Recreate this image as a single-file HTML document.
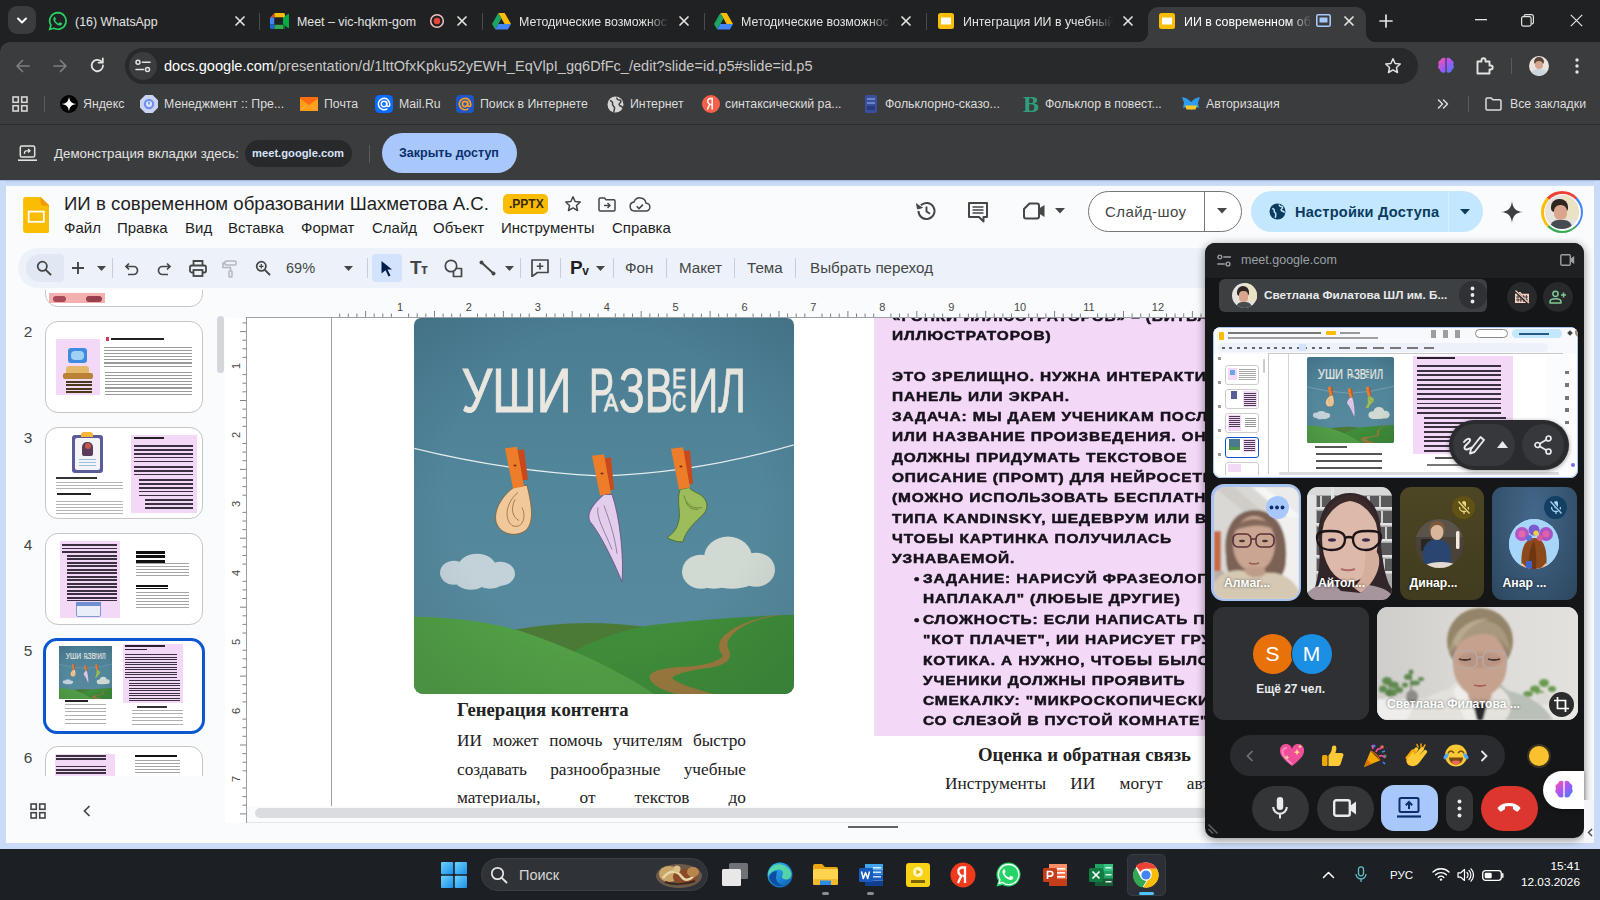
<!DOCTYPE html>
<html lang="ru">
<head>
<meta charset="utf-8">
<title>ИИ в современном образовании</title>
<style>
*{box-sizing:border-box;margin:0;padding:0}
html,body{width:1600px;height:900px;overflow:hidden;background:#f9fbfd;font-family:"Liberation Sans",sans-serif;}
.abs{position:absolute}
#root{position:relative;width:1600px;height:900px;overflow:hidden}
/* ---------- chrome ---------- */
#tabstrip{left:0;top:0;width:1600px;height:60px;background:#202122}
#toolbar{left:0;top:42px;width:1600px;height:82px;background:#3b3c3d;border-top-left-radius:10px}
#infobar{left:0;top:124px;width:1600px;height:57px;background:#3b3c3d;border-top:1px solid #2c2d2e}
.tab{position:absolute;top:1px;height:42px;color:#e3e3e3;font-size:12.4px;line-height:42px;white-space:nowrap}
.tabt{position:absolute;top:1px;overflow:hidden;height:42px}
.tsep{position:absolute;top:13px;width:1px;height:17px;background:#4a4b4c}
.tx{position:absolute;top:14px;width:14px;height:14px}
.bm{position:absolute;top:88px;height:32px;line-height:32px;color:#dcdcdc;font-size:12.3px;white-space:nowrap}
/* ---------- slides ---------- */
#page{left:0;top:181px;width:1600px;height:668px;background:#f9fbfd}
.menu{position:absolute;top:218.6px;font-size:15px;color:#1f1f1f;line-height:18px}
.tb{top:258px;height:20px;line-height:20px;font-size:15.2px;color:#444746;white-space:nowrap}
.rn{width:20px;height:14px;line-height:14px;text-align:center;font-size:11px;color:#444746}
.pk{height:20px;line-height:20px;font-size:13.3px;font-weight:bold;color:#16111a;white-space:nowrap;letter-spacing:.75px;-webkit-text-stroke:.5px #16111a;transform:scaleX(1.16);transform-origin:0 50%}
.sj{width:289px;height:24px;line-height:24px;font-family:"Liberation Serif",serif;font-size:17.3px;color:#222;text-align:justify;text-align-last:justify;white-space:normal}
.th{left:45px;width:158px;height:92px;border-radius:13px;border:1px solid #c4c7c5;background:#fff}
.fn{left:18px;width:20px;height:20px;line-height:20px;text-align:center;font-size:15.5px;color:#444746}
.tn{height:20px;line-height:20px;font-size:12.2px;font-weight:bold;color:#fff;white-space:nowrap;text-shadow:0 0 3px rgba(0,0,0,.6)}
/* ---------- taskbar ---------- */
#taskbar{left:0;top:849px;width:1600px;height:51px;background:#1c2025}
/* ---------- meet ---------- */
#meet{left:1205px;top:243px;width:379px;height:594.5px;background:#151617;border-radius:10px;box-shadow:0 2px 10px rgba(0,0,0,.45)}
</style>
</head>
<body>
<div id="root">

<!-- ======= CHROME TABSTRIP ======= -->

<div id="tabstrip" class="abs"></div>
<div class="abs" style="left:8px;top:6px;width:28px;height:28px;border-radius:9px;background:#3b3c3d"></div>
<svg class="abs" style="left:15px;top:15px" width="14" height="12" viewBox="0 0 14 12"><path d="M3 3.5 L7 7.5 L11 3.5" fill="none" stroke="#fff" stroke-width="1.9" stroke-linecap="round" stroke-linejoin="round"/></svg>
<!-- active tab -->
<div class="abs" style="left:1148px;top:7px;width:218px;height:36px;background:#3b3c3d;border-radius:10px 10px 0 0"></div>
<div class="abs" style="left:1138px;top:32px;width:10px;height:10px;background:radial-gradient(circle at 0 0,transparent 10px,#3b3c3d 10.5px)"></div>
<div class="abs" style="left:1366px;top:32px;width:10px;height:10px;background:radial-gradient(circle at 100% 0,transparent 10px,#3b3c3d 10.5px)"></div>

<!-- tab 1 whatsapp -->
<svg class="abs" style="left:48px;top:11px" width="20" height="20" viewBox="0 0 20 20"><path d="M10 1.6a8.3 8.3 0 0 0-7.1 12.6L1.7 18.4l4.3-1.1A8.3 8.3 0 1 0 10 1.6z" fill="none" stroke="#25d366" stroke-width="1.7"/><path d="M7.2 5.6c-.3 0-.7.1-1 .5-.4.5-1 1.300-.8 2.600.3 1.500 1.400 3.100 2.900 4.300 1.500 1.200 3 1.700 4 1.500.9-.2 1.600-.9 1.800-1.500.1-.4.1-.7-.1-.8l-1.800-.9c-.3-.1-.5 0-.7.200l-.6.8c-.2.2-.4.2-.7.100-1.300-.6-2.300-1.500-3-2.700-.1-.3-.1-.5.1-.6l.5-.7c.1-.2.100-.4.000-.6l-.8-1.800c-.1-.3-.3-.400-.5-.400z" fill="#25d366"/></svg>
<div class="tab" style="left:75px">(16) WhatsApp</div>
<svg class="tx" style="left:233px" viewBox="0 0 14 14"><path d="M3 3l8 8M11 3l-8 8" stroke="#e3e3e3" stroke-width="1.7" stroke-linecap="round"/></svg>
<div class="tsep" style="left:259px"></div>
<!-- tab 2 meet -->
<svg class="abs" style="left:270px;top:13px" width="19" height="16" viewBox="0 0 19 16"><path d="M0 4.500 L4.500 0 V4.500Z" fill="#ea4335"/><rect x="4.500" y="0" width="8.500" height="4.500" fill="#fbbc04"/><rect x="0" y="4.500" width="4.500" height="7" fill="#4285f4"/><path d="M0 11.5h4.500V16H1.500A1.500 1.500 0 0 1 0 14.500z" fill="#1967d2"/><rect x="4.500" y="11.5" width="8.500" height="4.500" fill="#34a853"/><path d="M13 0h.5A1.500 1.500 0 0 1 15 1.500V4.500L13 6z" fill="#fbbc04"/><path d="M13 4.800 L18 1 Q19 .4 19 1.600 V14.400 Q19 15.600 18 15 L13 11.200Z" fill="#00ac47"/><path d="M13 11.200 V16h.5a1.500 1.500 0 0 0 1.500-1.500V12.700z" fill="#00832d"/><rect x="4.500" y="4.500" width="8.500" height="7" fill="#202122"/></svg>
<div class="tab" style="left:297px">Meet – vic-hqkm-gom</div>
<svg class="abs" style="left:429px;top:13px" width="16" height="16" viewBox="0 0 16 16"><circle cx="8" cy="8" r="6.300" fill="none" stroke="#f1c4c0" stroke-width="1.500"/><circle cx="8" cy="8" r="3.200" fill="#e8453c"/></svg>
<svg class="tx" style="left:455px" viewBox="0 0 14 14"><path d="M3 3l8 8M11 3l-8 8" stroke="#e3e3e3" stroke-width="1.7" stroke-linecap="round"/></svg>
<div class="tsep" style="left:482px"></div>
<!-- tab 3 drive -->
<svg class="abs" style="left:492px;top:13px" width="19" height="17" viewBox="0 0 19 17"><path d="M6.300 0h6.400l6.300 11h-6.400z" fill="#fbbc04"/><path d="M6.300 0L0 11l3.200 5.600L9.500 5.600z" fill="#1ea362"/><path d="M3.200 16.600h12.600L19 11H6.400z" fill="#4285f4"/></svg>
<div class="tab tabt" style="left:519px;width:150px;-webkit-mask-image:linear-gradient(90deg,#000 128px,transparent 150px);mask-image:linear-gradient(90deg,#000 128px,transparent 150px)">Методические возможности</div>
<svg class="tx" style="left:677px" viewBox="0 0 14 14"><path d="M3 3l8 8M11 3l-8 8" stroke="#e3e3e3" stroke-width="1.7" stroke-linecap="round"/></svg>
<div class="tsep" style="left:704px"></div>
<!-- tab 4 drive -->
<svg class="abs" style="left:714px;top:13px" width="19" height="17" viewBox="0 0 19 17"><path d="M6.300 0h6.400l6.300 11h-6.400z" fill="#fbbc04"/><path d="M6.300 0L0 11l3.200 5.600L9.500 5.600z" fill="#1ea362"/><path d="M3.200 16.600h12.600L19 11H6.400z" fill="#4285f4"/></svg>
<div class="tab tabt" style="left:741px;width:150px;-webkit-mask-image:linear-gradient(90deg,#000 128px,transparent 150px);mask-image:linear-gradient(90deg,#000 128px,transparent 150px)">Методические возможности</div>
<svg class="tx" style="left:899px" viewBox="0 0 14 14"><path d="M3 3l8 8M11 3l-8 8" stroke="#e3e3e3" stroke-width="1.7" stroke-linecap="round"/></svg>
<div class="tsep" style="left:926px"></div>
<!-- tab 5 slides -->
<svg class="abs" style="left:938px;top:13px" width="16" height="16" viewBox="0 0 16 16"><rect width="16" height="16" rx="2.500" fill="#fbbc04"/><rect x="3" y="4.500" width="10" height="7" fill="#fff"/></svg>
<div class="tab tabt" style="left:963px;width:150px;-webkit-mask-image:linear-gradient(90deg,#000 128px,transparent 150px);mask-image:linear-gradient(90deg,#000 128px,transparent 150px)">Интеграция ИИ в учебный процесс</div>
<svg class="tx" style="left:1121px" viewBox="0 0 14 14"><path d="M3 3l8 8M11 3l-8 8" stroke="#e3e3e3" stroke-width="1.7" stroke-linecap="round"/></svg>
<!-- tab 6 active -->
<svg class="abs" style="left:1159px;top:13px" width="16" height="16" viewBox="0 0 16 16"><rect width="16" height="16" rx="2.500" fill="#fbbc04"/><rect x="3" y="4.500" width="10" height="7" fill="#fff"/></svg>
<div class="tab tabt" style="left:1184px;width:128px;color:#fff;-webkit-mask-image:linear-gradient(90deg,#000 106px,transparent 128px);mask-image:linear-gradient(90deg,#000 106px,transparent 128px)">ИИ в современном образовании</div>
<svg class="abs" style="left:1316px;top:14px" width="15" height="13" viewBox="0 0 15 13"><rect x=".8" y=".8" width="13.400" height="11.400" rx="1.500" fill="none" stroke="#a8c7fa" stroke-width="1.600"/><rect x="3.500" y="3.500" width="8" height="5" fill="#a8c7fa"/></svg>
<svg class="tx" style="left:1342px" viewBox="0 0 14 14"><path d="M3 3l8 8M11 3l-8 8" stroke="#e3e3e3" stroke-width="1.7" stroke-linecap="round"/></svg>
<svg class="abs" style="left:1379px;top:14px" width="14" height="14" viewBox="0 0 14 14"><path d="M7 1v12M1 7h12" stroke="#e3e3e3" stroke-width="1.700" stroke-linecap="round"/></svg>
<!-- window controls -->
<svg class="abs" style="left:1475px;top:19px" width="12" height="2" viewBox="0 0 12 2"><rect width="12" height="1.300" fill="#e3e3e3"/></svg>
<svg class="abs" style="left:1521px;top:14px" width="13" height="13" viewBox="0 0 13 13"><rect x=".6" y="2.600" width="9.500" height="9.500" rx="1.800" fill="none" stroke="#e3e3e3" stroke-width="1.200"/><path d="M3 2.600V2.400A1.800 1.800 0 0 1 4.800 .6h5.800a1.800 1.800 0 0 1 1.800 1.800v5.800A1.800 1.800 0 0 1 10.600 10h-.4" fill="none" stroke="#e3e3e3" stroke-width="1.200"/></svg>
<svg class="abs" style="left:1570px;top:14px" width="13" height="13" viewBox="0 0 13 13"><path d="M.8.8l11.400 11.400M12.200.8L.8 12.200" stroke="#e3e3e3" stroke-width="1.200"/></svg>

<!-- ======= CHROME TOOLBAR + BOOKMARKS ======= -->

<div id="toolbar" class="abs"></div>
<!-- nav -->
<svg class="abs" style="left:15px;top:58px" width="16" height="16" viewBox="0 0 16 16"><path d="M14 8H2.500M7.500 2.500L2 8l5.500 5.500" fill="none" stroke="#7d7e80" stroke-width="1.700" stroke-linecap="round" stroke-linejoin="round"/></svg>
<svg class="abs" style="left:52px;top:58px" width="16" height="16" viewBox="0 0 16 16"><path d="M2 8h11.500M8.500 2.500L14 8l-5.500 5.500" fill="none" stroke="#7d7e80" stroke-width="1.700" stroke-linecap="round" stroke-linejoin="round"/></svg>
<svg class="abs" style="left:89px;top:57px" width="17" height="17" viewBox="0 0 17 17"><path d="M14 8.500a5.700 5.700 0 1 1-1.700-4.050" fill="none" stroke="#e3e3e3" stroke-width="1.800" stroke-linecap="round"/><path d="M13.800 1.500v4.200H9.600" fill="none" stroke="#e3e3e3" stroke-width="1.800" stroke-linecap="round" stroke-linejoin="round"/></svg>
<!-- omnibox -->
<div class="abs" style="left:125px;top:48px;width:1293px;height:36px;border-radius:18px;background:#27292a"></div>
<div class="abs" style="left:129px;top:52px;width:28px;height:28px;border-radius:14px;background:#3b3c3d"></div>
<svg class="abs" style="left:135px;top:59px" width="16" height="14" viewBox="0 0 16 14"><circle cx="3" cy="3.200" r="2" fill="none" stroke="#e3e3e3" stroke-width="1.500"/><path d="M7.500 3.200H15" stroke="#e3e3e3" stroke-width="1.600" stroke-linecap="round"/><circle cx="12.500" cy="10.500" r="2" fill="none" stroke="#e3e3e3" stroke-width="1.500"/><path d="M1 10.500h7.500" stroke="#e3e3e3" stroke-width="1.600" stroke-linecap="round"/></svg>
<div class="abs" id="url" style="left:164px;top:55px;height:22px;line-height:22px;font-size:14.55px;color:#c7c7c7;white-space:nowrap"><span style="color:#fff">docs.google.com</span>/presentation/d/1lttOfxKpku52yEWH_EqVlpI_gq6DfFc_/edit?slide=id.p5#slide=id.p5</div>
<svg class="abs" style="left:1384px;top:57px" width="18" height="18" viewBox="0 0 18 18"><path d="M9 1.800l2.150 4.700 5.100.55-3.800 3.450 1.050 5L9 12.900 4.500 15.500l1.050-5-3.800-3.450 5.100-.55z" fill="none" stroke="#e3e3e3" stroke-width="1.500" stroke-linejoin="round"/></svg>
<!-- extension: brain -->
<svg class="abs" style="left:1436px;top:56px" width="20" height="20" viewBox="0 0 20 20"><defs><linearGradient id="br1" x1="0" y1="0" x2="1" y2="1"><stop offset="0" stop-color="#f857a6"/><stop offset=".5" stop-color="#a855f7"/><stop offset="1" stop-color="#3b82f6"/></linearGradient></defs><path d="M9.400 2.200C7.500 1 5 2 4.600 4.100 2.600 4.700 1.700 7 2.800 8.700 1.500 10.300 2 12.800 3.900 13.600c.1 2.300 2.500 3.800 4.600 2.900.4-.2.700-.4.900-.700zM10.600 2.200c1.900-1.200 4.400-.2 4.800 1.900 2 .6 2.900 2.900 1.800 4.600 1.300 1.600.8 4.100-1.100 4.900-.1 2.300-2.500 3.800-4.600 2.900-.4-.2-.7-.4-.9-.700z" fill="url(#br1)"/></svg>
<!-- puzzle -->
<svg class="abs" style="left:1474px;top:55px" width="21" height="21" viewBox="0 0 21 21"><path d="M3.500 6.500h4V5.300a2 2 0 1 1 4 0V6.500h4v4h1.200a2 2 0 1 1 0 4H15.500v4h-12z" fill="none" stroke="#e3e3e3" stroke-width="1.900" stroke-linejoin="round"/></svg>
<div class="abs" style="left:1511px;top:58px;width:1px;height:16px;background:#5a5b5c"></div>
<!-- avatar -->
<div class="abs" style="left:1529px;top:56px;width:20px;height:20px;border-radius:10px;background:#e9e4e0;overflow:hidden"><div class="abs" style="left:5px;top:1px;width:10px;height:7px;border-radius:5px 5px 2px 2px;background:#5b463c"></div><div class="abs" style="left:6px;top:5px;width:8px;height:8px;border-radius:4px;background:#d6a58e"></div><div class="abs" style="left:2px;top:13px;width:16px;height:10px;border-radius:6px 6px 0 0;background:#cdd6dd"></div></div>
<svg class="abs" style="left:1574px;top:57px" width="6" height="18" viewBox="0 0 6 18"><circle cx="3" cy="3" r="1.700" fill="#e3e3e3"/><circle cx="3" cy="9" r="1.700" fill="#e3e3e3"/><circle cx="3" cy="15" r="1.700" fill="#e3e3e3"/></svg>

<!-- bookmarks -->
<svg class="abs" style="left:12px;top:96px" width="16" height="16" viewBox="0 0 16 16"><g fill="none" stroke="#d5d5d5" stroke-width="1.600"><rect x="1" y="1" width="5.300" height="5.300"/><rect x="9.700" y="1" width="5.300" height="5.300"/><rect x="1" y="9.700" width="5.300" height="5.300"/><rect x="9.700" y="9.700" width="5.300" height="5.300"/></g></svg>
<div class="abs" style="left:44px;top:96px;width:1px;height:16px;background:#5a5b5c"></div>
<!-- yandex star -->
<svg class="abs" style="left:60px;top:95px" width="18" height="18" viewBox="0 0 18 18"><circle cx="9" cy="9" r="9" fill="#000"/><path d="M9 1.200C9.300 6.200 11.800 8.700 16.800 9 11.800 9.300 9.300 11.800 9 16.800 8.700 11.800 6.200 9.300 1.200 9 6.200 8.700 8.700 6.200 9 1.200z" fill="#fff"/></svg>
<div class="bm" style="left:83px">Яндекс</div>
<svg class="abs" style="left:140px;top:95px" width="18" height="18" viewBox="0 0 18 18"><path d="M5.300 0h7.400L18 5.300v7.400L12.700 18H5.300L0 12.700V5.300z" fill="#c9d3f3"/><circle cx="9" cy="9" r="5.200" fill="#6f8ff0"/><circle cx="9" cy="9" r="3" fill="#dfe6fb"/><path d="M9 6.800v2.600" stroke="#4a6fe0" stroke-width="1.200"/></svg>
<div class="bm" style="left:164px">Менеджмент :: Пре...</div>
<svg class="abs" style="left:300px;top:97px" width="18" height="14" viewBox="0 0 18 14"><rect width="18" height="14" rx="2" fill="#ff9e1b"/><path d="M0 1.500l9 6.500 9-6.500V0H0z" fill="#ff6a13"/><path d="M0 14l6.500-6M18 14l-6.500-6" stroke="#ffb54a" stroke-width="1"/></svg>
<div class="bm" style="left:324px">Почта</div>
<svg class="abs" style="left:375px;top:95px" width="18" height="18" viewBox="0 0 18 18"><rect width="18" height="18" rx="4.500" fill="#0a6cff"/><circle cx="9" cy="9" r="2.700" fill="none" stroke="#fff" stroke-width="1.500"/><path d="M11.700 6.500V10a1.500 1.500 0 0 0 3 0V9a5.700 5.700 0 1 0-2.300 4.600" fill="none" stroke="#fff" stroke-width="1.500"/></svg>
<div class="bm" style="left:399px">Mail.Ru</div>
<svg class="abs" style="left:456px;top:95px" width="18" height="18" viewBox="0 0 18 18"><rect width="18" height="18" rx="4" fill="#1d56c9"/><circle cx="9" cy="9" r="2.600" fill="none" stroke="#ff9e1b" stroke-width="1.700"/><path d="M11.700 6.500V10a1.500 1.500 0 0 0 3 0V9a5.700 5.700 0 1 0-2.300 4.600" fill="none" stroke="#ff9e1b" stroke-width="1.700"/></svg>
<div class="bm" style="left:480px">Поиск в Интернете</div>
<svg class="abs" style="left:607px;top:96px" width="17" height="17" viewBox="0 0 17 17"><circle cx="8.500" cy="8.500" r="8" fill="#d5d5d5"/><path d="M3 4.500c2 .5 3 2 2.500 3.500S7 10 7.500 11.500 6.500 15 7 16M10 1.500c-.5 2 1 2.500 2.500 2.500s2 2 .5 3-1 2.500.5 3 2.500 1.500 2 2.500" fill="none" stroke="#3b3c3d" stroke-width="1.500"/></svg>
<div class="bm" style="left:630px">Интернет</div>
<svg class="abs" style="left:702px;top:95px" width="18" height="18" viewBox="0 0 18 18"><circle cx="9" cy="9" r="9" fill="#f8604a"/><path d="M10.200 14.500V3.500H8.600c-1.700 0-2.900 1.100-2.900 2.800 0 1.400.7 2.300 2 3l-2.400 5.200M8.600 9.500h1.500" fill="none" stroke="#fff" stroke-width="1.500"/></svg>
<div class="bm" style="left:725px">синтаксический ра...</div>
<svg class="abs" style="left:864px;top:95px" width="14" height="18" viewBox="0 0 14 18"><rect x="1" y="0" width="12" height="18" rx="1.500" fill="#3a4f9c"/><rect x="3" y="3" width="8" height="2" fill="#6d82cf"/><rect x="3" y="7" width="8" height="2" fill="#6d82cf"/><rect x="3" y="11" width="8" height="4" fill="#2a3a7a"/></svg>
<div class="bm" style="left:885px">Фольклорно-сказо...</div>
<div class="abs" style="left:1023px;top:91px;width:18px;height:26px;line-height:26px;font-family:'Liberation Serif',serif;font-weight:bold;font-size:24px;color:#2f9e7b">B</div>
<div class="bm" style="left:1045px">Фольклор в повест...</div>
<svg class="abs" style="left:1182px;top:96px" width="18" height="16" viewBox="0 0 18 16"><path d="M0 1l5 1.500L9 6l4-3.500L18 1l-2 6 1 5-5-1.500L9 14l-3-3.500L1 12l1-5z" fill="#2d9cf0"/><path d="M3 9.500h12l-1.500 4h-9z" fill="#ffc727"/></svg>
<div class="bm" style="left:1206px">Авторизация</div>
<svg class="abs" style="left:1437px;top:99px" width="12" height="10" viewBox="0 0 12 10"><path d="M1.500 1l4 4-4 4M6.500 1l4 4-4 4" fill="none" stroke="#dcdcdc" stroke-width="1.500" stroke-linecap="round" stroke-linejoin="round"/></svg>
<div class="abs" style="left:1468px;top:96px;width:1px;height:16px;background:#5a5b5c"></div>
<svg class="abs" style="left:1485px;top:97px" width="17" height="14" viewBox="0 0 17 14"><path d="M1 2.200A1.200 1.200 0 0 1 2.200 1h4l1.600 1.800h7A1.200 1.200 0 0 1 16 4v7.800a1.200 1.200 0 0 1-1.200 1.200H2.200A1.200 1.200 0 0 1 1 11.800z" fill="none" stroke="#dcdcdc" stroke-width="1.500" stroke-linejoin="round"/></svg>
<div class="bm" style="left:1510px">Все закладки</div>

<!-- ======= SHARING INFOBAR ======= -->

<div id="infobar" class="abs"></div>
<svg class="abs" style="left:18px;top:145px" width="19" height="17" viewBox="0 0 19 17"><rect x="2.300" y="1" width="14.400" height="11" rx="1.600" fill="none" stroke="#e3e3e3" stroke-width="1.500"/><path d="M0 15.200h19" stroke="#e3e3e3" stroke-width="1.600"/><path d="M6.500 9V7.800A2 2 0 0 1 8.500 5.800h3.200M10.200 4l1.800 1.800-1.800 1.800" fill="none" stroke="#e3e3e3" stroke-width="1.300"/></svg>
<div class="abs" id="demo" style="left:54px;top:144px;height:20px;line-height:20px;font-size:13.3px;color:#e3e3e3;white-space:nowrap">Демонстрация вкладки здесь:</div>
<div class="abs" style="left:245px;top:140px;width:107px;height:27px;border-radius:14px;background:#27292a"></div>
<div class="abs" id="chip" style="left:252px;top:144px;height:20px;line-height:19px;font-size:11.2px;font-weight:bold;color:#d7e3f9;white-space:nowrap">meet.google.com</div>
<div class="abs" style="left:369px;top:145px;width:1px;height:18px;background:#5a5b5c"></div>
<div class="abs" style="left:382px;top:133px;width:135px;height:40px;border-radius:20px;background:#a8c7fa"></div>
<div class="abs" id="closebtn" style="left:399px;top:143px;height:20px;line-height:20px;font-size:12.5px;font-weight:bold;color:#0b2f6b;white-space:nowrap">Закрыть доступ</div>


<!-- ======= SLIDES PAGE ======= -->

<div id="page" class="abs"></div>
<!-- tab-capture blue frame -->
<div class="abs" style="left:0;top:180px;width:1600px;height:6px;background:linear-gradient(#9fb6dc 0,#c3d6f5 2px,#cfdff8 100%)"></div>
<div class="abs" style="left:0;top:181px;width:6px;height:668px;background:#c9dbf7"></div>
<div class="abs" style="left:1594px;top:181px;width:6px;height:668px;background:#c9dbf7"></div>
<div class="abs" style="left:0;top:843px;width:1600px;height:6px;background:#c9dbf7"></div>

<!-- slides logo -->
<svg class="abs" style="left:22.500px;top:196.500px" width="26.500" height="36" viewBox="0 0 27 37"><path d="M2.500 0H18l9 9v25.500A2.500 2.500 0 0 1 24.500 37h-22A2.500 2.500 0 0 1 0 34.500v-32A2.500 2.500 0 0 1 2.500 0z" fill="#fbbc04"/><path d="M18 0l9 9h-6.500A2.500 2.500 0 0 1 18 6.500z" fill="#f29900"/><rect x="5.700" y="15" width="15.600" height="10.500" fill="none" stroke="#fff" stroke-width="1.800"/></svg>
<div class="abs" id="doctitle" style="left:64px;top:192px;height:24px;line-height:24px;font-size:18.6px;color:#1f1f1f;white-space:nowrap">ИИ в современном образовании Шахметова А.С.</div>
<div class="abs" style="left:503px;top:194px;width:45px;height:20px;border-radius:5px;background:#fbbc04"></div>
<div class="abs" id="pptx" style="left:509px;top:194px;height:20px;line-height:20px;font-size:12px;font-weight:bold;color:#3a2a00;white-space:nowrap">.PPTX</div>
<svg class="abs" style="left:564px;top:195px" width="18" height="18" viewBox="0 0 18 18"><path d="M9 1.800l2.150 4.700 5.100.55-3.800 3.450 1.050 5L9 12.900 4.500 15.500l1.050-5-3.800-3.450 5.100-.55z" fill="none" stroke="#444746" stroke-width="1.500" stroke-linejoin="round"/></svg>
<svg class="abs" style="left:598px;top:197px" width="18" height="15" viewBox="0 0 18 15"><path d="M1 2.200A1.200 1.200 0 0 1 2.200 1h4.300l1.600 1.800h7.700A1.200 1.200 0 0 1 17 4v8.800a1.200 1.200 0 0 1-1.200 1.200H2.200A1.200 1.200 0 0 1 1 12.800z" fill="none" stroke="#444746" stroke-width="1.500" stroke-linejoin="round"/><path d="M6 8.500h5.500M9.500 6l2.500 2.500-2.500 2.500" fill="none" stroke="#444746" stroke-width="1.400"/></svg>
<svg class="abs" style="left:629px;top:197px" width="22" height="15" viewBox="0 0 22 15"><path d="M5.500 14A4.500 4.500 0 0 1 5 5.050 6.200 6.200 0 0 1 17 6.200 3.900 3.900 0 0 1 17 14z" fill="none" stroke="#444746" stroke-width="1.500" stroke-linejoin="round"/><path d="M7.700 9.300l2.300 2.300 4-4" fill="none" stroke="#444746" stroke-width="1.500"/></svg>
<!-- menus -->
<div class="menu" style="left:64px">Файл</div>
<div class="menu" style="left:117px">Правка</div>
<div class="menu" style="left:185px">Вид</div>
<div class="menu" style="left:228px">Вставка</div>
<div class="menu" style="left:301px">Формат</div>
<div class="menu" style="left:372px">Слайд</div>
<div class="menu" style="left:433px">Объект</div>
<div class="menu" style="left:501px">Инструменты</div>
<div class="menu" style="left:612px">Справка</div>

<!-- right header icons -->
<svg class="abs" style="left:915px;top:200px" width="22" height="22" viewBox="0 0 22 22"><path d="M3.500 11a8 8 0 1 0 2.400-5.700" fill="none" stroke="#444746" stroke-width="2"/><path d="M1.500 3.500l1 5.500 5.200-1.500" fill="#444746" stroke="#444746" stroke-width="1" stroke-linejoin="round"/><path d="M11.500 6.500V11.500l3.500 2.200" fill="none" stroke="#444746" stroke-width="1.900"/></svg>
<svg class="abs" style="left:967px;top:201px" width="22" height="22" viewBox="0 0 22 22"><path d="M2 2h18v14h-3.500v4.500L12 16H2z" fill="none" stroke="#444746" stroke-width="2" stroke-linejoin="round"/><path d="M5.500 6h11M5.500 9h11M5.500 12h11" stroke="#444746" stroke-width="1.600"/></svg>
<svg class="abs" style="left:1022px;top:202px" width="24" height="18" viewBox="0 0 24 18"><path d="M7.500 1.500H15a2 2 0 0 1 2 2v11a2 2 0 0 1-2 2H4a2 2 0 0 1-2-2V7z" fill="none" stroke="#444746" stroke-width="2" stroke-linejoin="round"/><path d="M17 6.500l5.500-3.500v12L17 11.500z" fill="#444746"/></svg>
<svg class="abs" style="left:1055px;top:208px" width="10" height="6" viewBox="0 0 10 6"><path d="M0 0h10L5 5.500z" fill="#444746"/></svg>
<!-- slideshow button -->
<div class="abs" style="left:1088px;top:191px;width:154px;height:41px;border-radius:21px;border:1px solid #747775;background:#fff"></div>
<div class="abs" style="left:1204px;top:192px;width:1px;height:39px;background:#747775"></div>
<div class="abs" id="slideshow" style="left:1105px;top:201px;height:22px;line-height:22px;font-size:15px;letter-spacing:.4px;color:#444746;white-space:nowrap">Слайд-шоу</div>
<svg class="abs" style="left:1217px;top:208px" width="10" height="6" viewBox="0 0 10 6"><path d="M0 0h10L5 5.500z" fill="#444746"/></svg>
<!-- share button -->
<div class="abs" style="left:1251px;top:191px;width:232px;height:41px;border-radius:21px;background:#c2e7ff"></div>
<div class="abs" style="left:1448px;top:191px;width:1px;height:41px;background:#d9effd"></div>
<svg class="abs" style="left:1269px;top:203px" width="17" height="17" viewBox="0 0 17 17"><circle cx="8.500" cy="8.500" r="8" fill="#0b3b60"/><path d="M3.200 5.500c1.800.2 2.300 1.500 2 2.600-.3 1 1 1.400 1.500 2.300.5.900-.500 2.500-.2 4.500M10.500 1.500c-.5 1.500.5 2 1.800 2s1.700 1.500.5 2.300-.8 2 .5 2.300c1.300.3 2 1 2.200 1.500" fill="none" stroke="#c2e7ff" stroke-width="1.500"/></svg>
<div class="abs" id="share" style="left:1295px;top:201px;height:22px;line-height:22px;font-size:14.6px;font-weight:bold;letter-spacing:.2px;color:#0b3b60;white-space:nowrap">Настройки Доступа</div>
<svg class="abs" style="left:1460px;top:209px" width="10" height="6" viewBox="0 0 10 6"><path d="M0 0h10L5 5.500z" fill="#0b3b60"/></svg>
<!-- gemini spark -->
<svg class="abs" style="left:1501px;top:201px" width="22" height="22" viewBox="0 0 22 22"><path d="M11 0C11.500 7 15 10.500 22 11 15 11.500 11.500 15 11 22 10.500 15 7 11.500 0 11 7 10.500 10.500 7 11 0z" fill="#3c4043"/></svg>
<!-- account avatar -->
<div class="abs" style="left:1541px;top:191px;width:42px;height:42px;border-radius:21px;background:conic-gradient(from -45deg,#ea4335 0 25%,#4285f4 25% 50%,#34a853 50% 75%,#fbbc04 75% 100%)"></div>
<div class="abs" style="left:1543.500px;top:193.500px;width:37px;height:37px;border-radius:19px;background:#fff"></div>
<div class="abs" style="left:1545px;top:195px;width:34px;height:34px;border-radius:17px;background:#e6e3df;overflow:hidden">
  <div class="abs" style="left:17px;top:0;width:17px;height:24px;background:#e9e2c4"></div>
  <div class="abs" style="left:6px;top:4px;width:17px;height:13px;border-radius:8px 8px 4px 4px;background:#2f2622"></div>
  <div class="abs" style="left:9px;top:10px;width:13px;height:15px;border-radius:6px;background:#d9a58e"></div>
  <div class="abs" style="left:5px;top:25px;width:22px;height:12px;border-radius:8px 8px 0 0;background:#474c50"></div>
</div>

<!-- TOOLBAR -->
<div class="abs" style="left:18px;top:248px;width:1230px;height:40px;border-radius:20px;background:#edf2fa"></div>
<div class="abs" style="left:26px;top:254px;width:38px;height:28px;border-radius:14px 4px 4px 14px;background:#e1e8f3"></div>
<svg class="abs" style="left:36px;top:260px" width="16" height="16" viewBox="0 0 16 16"><circle cx="6.300" cy="6.300" r="4.600" fill="none" stroke="#444746" stroke-width="1.800"/><path d="M9.800 9.800l4.700 4.700" stroke="#444746" stroke-width="1.900" stroke-linecap="round"/></svg>
<svg class="abs" style="left:71px;top:261px" width="14" height="14" viewBox="0 0 14 14"><path d="M7 1v12M1 7h12" stroke="#444746" stroke-width="1.900"/></svg>
<svg class="abs" style="left:97px;top:266px" width="9" height="5" viewBox="0 0 9 5"><path d="M0 0h9L4.500 5z" fill="#444746"/></svg>
<div class="abs" style="left:112px;top:258px;width:1px;height:20px;background:#c7cdd6"></div>
<svg class="abs" style="left:124px;top:262px" width="15" height="14" viewBox="0 0 15 14"><path d="M4 12.500h5.500a4 4 0 0 0 0-8H2M5 1.500l-3 3 3 3" fill="none" stroke="#444746" stroke-width="1.700"/></svg>
<svg class="abs" style="left:157px;top:262px" width="15" height="14" viewBox="0 0 15 14"><path d="M11 12.500H5.500a4 4 0 0 1 0-8H13M10 1.500l3 3-3 3" fill="none" stroke="#444746" stroke-width="1.700"/></svg>
<svg class="abs" style="left:189px;top:260px" width="18" height="17" viewBox="0 0 18 17"><path d="M4.500 5.500V1h9v4.500" fill="none" stroke="#444746" stroke-width="1.800"/><rect x="1" y="5.500" width="16" height="7" rx="1.800" fill="none" stroke="#444746" stroke-width="1.800"/><rect x="4.500" y="10" width="9" height="6" fill="#edf2fa" stroke="#444746" stroke-width="1.800"/></svg>
<svg class="abs" style="left:222px;top:260px" width="16" height="18" viewBox="0 0 16 18"><rect x="3" y="1" width="11" height="4" rx="1" fill="none" stroke="#b4b8bd" stroke-width="1.600"/><path d="M3 3H1v4.500h7.500V11" fill="none" stroke="#b4b8bd" stroke-width="1.600"/><rect x="7" y="11" width="3" height="6" rx=".8" fill="none" stroke="#b4b8bd" stroke-width="1.500"/></svg>
<svg class="abs" style="left:255px;top:260px" width="16" height="16" viewBox="0 0 16 16"><circle cx="6.300" cy="6.300" r="4.600" fill="none" stroke="#444746" stroke-width="1.800"/><path d="M9.800 9.800l4.700 4.700" stroke="#444746" stroke-width="1.900" stroke-linecap="round"/><path d="M6.300 4v4.600M4 6.300h4.600" stroke="#444746" stroke-width="1.300"/></svg>
<div class="abs" id="zoompct" style="left:286px;top:258px;height:20px;line-height:20px;font-size:14.500px;color:#444746">69%</div>
<svg class="abs" style="left:344px;top:266px" width="9" height="5" viewBox="0 0 9 5"><path d="M0 0h9L4.500 5z" fill="#444746"/></svg>
<div class="abs" style="left:367px;top:258px;width:1px;height:20px;background:#c7cdd6"></div>
<div class="abs" style="left:372px;top:254px;width:30px;height:28px;border-radius:4px;background:#d3e3fd"></div>
<svg class="abs" style="left:380px;top:260px" width="14" height="17" viewBox="0 0 14 17"><path d="M1.500 1l10.500 8.500H7.500l3 6-2 .9-2.900-6.100L1.500 13.500z" fill="#041e49"/></svg>
<div class="abs" style="left:410px;top:257px;height:22px;line-height:22px;font-size:19px;font-weight:bold;color:#444746;letter-spacing:-.5px">T<span style="font-size:14px">т</span></div>
<svg class="abs" style="left:444px;top:259px" width="19" height="19" viewBox="0 0 19 19"><circle cx="7" cy="7" r="5.700" fill="none" stroke="#444746" stroke-width="1.700"/><path d="M9.500 12.500V17.500h8v-8h-4.500" fill="none" stroke="#444746" stroke-width="1.700" stroke-linejoin="round"/></svg>
<svg class="abs" style="left:479px;top:260px" width="17" height="16" viewBox="0 0 17 16"><path d="M2 2l13 12" stroke="#444746" stroke-width="2"/><circle cx="2.500" cy="2.500" r="2" fill="#444746"/><circle cx="14.500" cy="13.500" r="2" fill="#444746"/></svg>
<svg class="abs" style="left:505px;top:266px" width="9" height="5" viewBox="0 0 9 5"><path d="M0 0h9L4.500 5z" fill="#444746"/></svg>
<div class="abs" style="left:520px;top:258px;width:1px;height:20px;background:#c7cdd6"></div>
<svg class="abs" style="left:531px;top:259px" width="18" height="18" viewBox="0 0 18 18"><path d="M1 1h16v12.500H6.500L1 17.500z" fill="none" stroke="#444746" stroke-width="1.700" stroke-linejoin="round"/><path d="M9 4v6.500M5.800 7.200h6.500" stroke="#444746" stroke-width="1.600"/></svg>
<div class="abs" style="left:560px;top:258px;width:1px;height:20px;background:#c7cdd6"></div>
<div class="abs" style="left:570px;top:257px;height:22px;line-height:22px;font-size:19px;font-weight:bold;color:#1f1f1f;letter-spacing:-.5px">P<span style="font-size:12px;position:relative;top:1px">v</span></div>
<svg class="abs" style="left:596px;top:266px" width="9" height="5" viewBox="0 0 9 5"><path d="M0 0h9L4.500 5z" fill="#444746"/></svg>
<div class="abs" style="left:613px;top:258px;width:1px;height:20px;background:#c7cdd6"></div>
<div class="abs tb" style="left:625px">Фон</div>
<div class="abs" style="left:666px;top:258px;width:1px;height:20px;background:#c7cdd6"></div>
<div class="abs tb" style="left:679px">Макет</div>
<div class="abs" style="left:734px;top:258px;width:1px;height:20px;background:#c7cdd6"></div>
<div class="abs tb" style="left:747px">Тема</div>
<div class="abs" style="left:795px;top:258px;width:1px;height:20px;background:#c7cdd6"></div>
<div class="abs tb" style="left:810px">Выбрать переход</div>



<svg width="0" height="0" style="position:absolute"><defs>
<radialGradient id="vig" cx=".5" cy=".45" r=".75"><stop offset=".55" stop-color="#000" stop-opacity="0"/><stop offset="1" stop-color="#0b1f2b" stop-opacity=".13"/></radialGradient>
<linearGradient id="sky" x1="0" y1="0" x2="0" y2="1"><stop offset="0" stop-color="#4a7c92"/><stop offset=".45" stop-color="#52869b"/><stop offset=".85" stop-color="#578a9e"/></linearGradient>
<symbol id="ushi" viewBox="0 0 380 376" preserveAspectRatio="none">
<rect width="380" height="376" fill="url(#sky)"/>
<!-- hills -->
<path d="M100 312 Q166 300 230 309 L230 360 L100 360z" fill="#4b7a37"/>
<path d="M162 332 Q203 312 240 307 Q313 299 380 297 V376 H162z" fill="#3f8d3a"/>
<path d="M0 299 Q60 300 106 313 Q162 332 203 354 Q226 366 240 376 H0z" fill="#52a046"/>
<path d="M357 298 Q326 304 311 317 Q300 327 309 338 Q300 348 264 349 Q232 352 236 361 Q240 370 262 376 H300 Q262 366 258 360 Q262 354 300 349 Q322 344 314 330 Q310 320 330 308 Q345 300 368 297z" fill="#9c7a3e"/>
<!-- clouds -->
<g fill="#c3d2d9"><ellipse cx="40" cy="255" rx="14" ry="12"/><ellipse cx="63" cy="250" rx="19" ry="14"/><ellipse cx="86" cy="256" rx="15" ry="12"/><ellipse cx="57" cy="262" rx="16" ry="10"/><ellipse cx="76" cy="262" rx="15" ry="9"/></g>
<g fill="#d0d9d2"><ellipse cx="287" cy="254" rx="19" ry="17"/><ellipse cx="314" cy="240" rx="24" ry="21"/><ellipse cx="342" cy="252" rx="19" ry="17"/><ellipse cx="318" cy="259" rx="26" ry="12"/><ellipse cx="300" cy="262" rx="18" ry="9"/></g>
<!-- title -->
<g fill="#e9e7e0" stroke="#e9e7e0" stroke-width=".9" font-family="Liberation Sans, sans-serif">
<text x="47.500" y="94.500" font-size="62" textLength="110" lengthAdjust="spacingAndGlyphs">УШИ</text>
<text x="175" y="94.500" font-size="62" textLength="25" lengthAdjust="spacingAndGlyphs">Р</text>
<text x="190" y="94" font-size="23" textLength="14" lengthAdjust="spacingAndGlyphs">А</text>
<text x="205" y="94.500" font-size="62" textLength="54" lengthAdjust="spacingAndGlyphs">ЗВ</text>
<text x="258" y="71" font-size="27" textLength="14" lengthAdjust="spacingAndGlyphs">Е</text>
<text x="258" y="94" font-size="27" textLength="14" lengthAdjust="spacingAndGlyphs">С</text>
<text x="274" y="94.500" font-size="62" textLength="58" lengthAdjust="spacingAndGlyphs">ИЛ</text>
</g>
<!-- rope -->
<path d="M0 131 Q94 154 186 158.500 Q280 156 380 127.500" fill="none" stroke="#e6eef0" stroke-width="1.100"/>
<!-- ear 1 -->
<path d="M103 168 C92 174 79 190 82 204 C85 216 100 220 110 214 C121 207 118 188 113 168z" fill="#efc99a" stroke="#8a5a2b" stroke-width=".8"/>
<path d="M104 175 C93 184 89 200 98 208 C108 212 113 200 108 190 M101 182 C96 192 99 200 105 203" fill="none" stroke="#8a5a2b" stroke-width=".7"/>
<!-- ear 2 -->
<path d="M190 177 C180 186 172 195 176 204 C186 216 198 240 208 264 C210 240 206 200 198 177z" fill="#e2cdec" stroke="#6a4a80" stroke-width=".8"/>
<path d="M184 190 C182 200 190 212 198 232 M190 188 C194 200 200 214 203 236" fill="none" stroke="#6a4a80" stroke-width=".6"/>
<!-- ear 3 -->
<path d="M266 172 C262 186 268 196 264 206 C262 214 256 218 253 220 C258 223 266 225 269 224 C272 212 282 204 290 196 C296 188 292 180 284 176 C280 174 276 172 275 170z" fill="#9dbd5c" stroke="#4a6a20" stroke-width=".8"/>
<path d="M270 178 C272 188 280 192 288 190 M272 184 C274 190 278 192 284 192" fill="none" stroke="#4a6a20" stroke-width=".6"/>
<!-- pegs -->
<g>
<path d="M103 133 L110 132 L114 162 L108 163z" fill="#c9481c"/>
<path d="M91 131 L103 129.500 L110 169 L99 171z" fill="#ee7d2a"/><ellipse cx="101" cy="148" rx="1.600" ry="1" fill="#8a2a10"/>
<path d="M190 141 L197 140 L200 172 L194 173z" fill="#c9481c"/>
<path d="M178 138.500 L190 137 L197 176 L186 178z" fill="#ee7d2a"/><ellipse cx="188" cy="156" rx="1.600" ry="1" fill="#8a2a10"/>
<path d="M269 134 L276 133 L279 166 L273 167z" fill="#c9481c"/>
<path d="M257 131.500 L269 130 L276 170 L265 172z" fill="#ee7d2a"/><ellipse cx="267" cy="149" rx="1.600" ry="1" fill="#8a2a10"/>
</g>
<rect width="380" height="376" fill="url(#vig)"/>
</symbol>
</defs></svg>


<!-- FILMSTRIP -->
<div class="abs" style="left:6px;top:290px;width:212px;height:486px;overflow:hidden">
<div class="abs" style="left:-6px;top:-290px;width:230px;height:900px">
<!-- thumb 1 -->
<div class="abs th" style="top:215px"></div>
<div class="abs" style="left:49px;top:293px;width:56px;height:10px;background:#f2b0ae"></div>
<div class="abs" style="left:53px;top:296px;width:13px;height:6px;background:#a8485a;border-radius:3px"></div>
<div class="abs" style="left:86px;top:296px;width:16px;height:6px;background:#96404f;border-radius:3px"></div>
<!-- thumb 2 -->
<div class="abs fn" style="top:322px">2</div>
<div class="abs th" style="top:321px"></div>
<div class="abs" style="left:56px;top:339px;width:44px;height:56px;background:#f3d8f8"></div>
<div class="abs" style="left:68px;top:348px;width:19px;height:15px;border-radius:3px;background:#3f8be0"></div>
<div class="abs" style="left:71px;top:351px;width:13px;height:9px;border-radius:4px;background:#9fd0f5"></div>
<div class="abs" style="left:66px;top:366px;width:23px;height:9px;border-radius:3px;background:#e3b868"></div>
<div class="abs" style="left:63px;top:373px;width:30px;height:6px;border-radius:2px;background:#b98235"></div>
<div class="abs" style="left:66.0px;top:381.0px;width:26.0px;height:12.0px;background:repeating-linear-gradient(180deg,#4a3a18 0,#4a3a18 2.0px,transparent 2.0px,transparent 3.4px)"></div>
<div class="abs" style="left:106px;top:337px;width:3px;height:4px;background:#d23c5a"></div>
<div class="abs" style="left:111px;top:337.500px;width:53px;height:2.500px;background:#222"></div>
<div class="abs" style="left:104.0px;top:347.0px;width:88.0px;height:21.0px;background:repeating-linear-gradient(180deg,#9a9a9a 0,#9a9a9a 1.1px,transparent 1.1px,transparent 3.1px)"></div><div class="abs" style="left:105.0px;top:372.0px;width:87.0px;height:23.0px;background:repeating-linear-gradient(180deg,#9a9a9a 0,#9a9a9a 1.1px,transparent 1.1px,transparent 3.1px)"></div>
<!-- thumb 3 -->
<div class="abs fn" style="top:428px">3</div>
<div class="abs th" style="top:427px"></div>
<div class="abs" style="left:72px;top:435px;width:31px;height:38px;border-radius:3px;background:#5a5c9a"></div>
<div class="abs" style="left:75px;top:438px;width:25px;height:32px;border-radius:2px;background:#f4f4f8"></div>
<div class="abs" style="left:81px;top:432px;width:12px;height:5px;border-radius:3px 3px 0 0;background:#f5b63a"></div>
<div class="abs" style="left:82px;top:442px;width:11px;height:14px;border-radius:5px 5px 2px 2px;background:#5a3d5c"></div>
<div class="abs" style="left:84.500px;top:443px;width:6px;height:6px;border-radius:3px;background:#c9574a"></div>
<div class="abs" style="left:79.0px;top:459.0px;width:17.0px;height:9.0px;background:repeating-linear-gradient(180deg,#9ac0e0 0,#9ac0e0 1.2px,transparent 1.2px,transparent 3.0px)"></div>
<div class="abs" style="left:130.500px;top:434.500px;width:66.500px;height:78px;background:#f3d8f8"></div>
<div class="abs" style="left:134px;top:436.500px;width:30px;height:2px;background:#222"></div>
<div class="abs" style="left:134.0px;top:445.0px;width:59.0px;height:19.0px;background:repeating-linear-gradient(180deg,#3a3040 0,#3a3040 1.7px,transparent 1.7px,transparent 3.9px)"></div><div class="abs" style="left:134.0px;top:466.0px;width:59.0px;height:12.0px;background:repeating-linear-gradient(180deg,#3a3040 0,#3a3040 1.7px,transparent 1.7px,transparent 3.9px)"></div><div class="abs" style="left:139.0px;top:479.0px;width:54.0px;height:20.0px;background:repeating-linear-gradient(180deg,#3a3040 0,#3a3040 1.7px,transparent 1.7px,transparent 3.9px)"></div><div class="abs" style="left:145.0px;top:499.0px;width:48.0px;height:11.0px;background:repeating-linear-gradient(180deg,#3a3040 0,#3a3040 1.7px,transparent 1.7px,transparent 3.9px)"></div>
<div class="abs" style="left:56px;top:477px;width:41px;height:1.500px;background:#333"></div>
<div class="abs" style="left:56.0px;top:482.0px;width:67.0px;height:8.0px;background:repeating-linear-gradient(180deg,#b5b5b5 0,#b5b5b5 1.0px,transparent 1.0px,transparent 3.1px)"></div>
<div class="abs" style="left:57px;top:493px;width:34px;height:1.700px;background:#222"></div>
<div class="abs" style="left:56.0px;top:501.0px;width:67.0px;height:13.0px;background:repeating-linear-gradient(180deg,#b5b5b5 0,#b5b5b5 1.0px,transparent 1.0px,transparent 3.1px)"></div>
<!-- thumb 4 -->
<div class="abs fn" style="top:535px">4</div>
<div class="abs th" style="top:533px"></div>
<div class="abs" style="left:60px;top:541px;width:60px;height:77px;background:#f3d8f8"></div>
<div class="abs" style="left:62.0px;top:544.0px;width:55.0px;height:10.0px;background:repeating-linear-gradient(180deg,#3a3040 0,#3a3040 1.7px,transparent 1.7px,transparent 3.5px)"></div><div class="abs" style="left:67.0px;top:555.0px;width:50.0px;height:46.0px;background:repeating-linear-gradient(180deg,#3a3040 0,#3a3040 1.7px,transparent 1.7px,transparent 3.5px)"></div>
<div class="abs" style="left:76px;top:602px;width:25px;height:15px;border-radius:2px;background:#e9eef8;border:1px solid #7f9bd0"></div>
<div class="abs" style="left:76px;top:602px;width:25px;height:4px;background:#6f8fd0"></div>
<div class="abs" style="left:135.500px;top:551px;width:29px;height:13px;background:repeating-linear-gradient(180deg,#111 0,#111 2.800px,transparent 2.800px,transparent 4.500px)"></div>
<div class="abs" style="left:136.0px;top:563.0px;width:53.0px;height:13.0px;background:repeating-linear-gradient(180deg,#a5a5a5 0,#a5a5a5 1.0px,transparent 1.0px,transparent 3.0px)"></div>
<div class="abs" style="left:136px;top:585px;width:32px;height:4.500px;background:repeating-linear-gradient(180deg,#111 0,#111 1.800px,transparent 1.800px,transparent 2.600px)"></div>
<div class="abs" style="left:136.0px;top:592.0px;width:53.0px;height:17.0px;background:repeating-linear-gradient(180deg,#a5a5a5 0,#a5a5a5 1.0px,transparent 1.0px,transparent 3.0px)"></div>
<!-- thumb 5 selected -->
<div class="abs fn" style="top:641px">5</div>
<div class="abs" style="left:43px;top:638px;width:162px;height:96px;border-radius:14px;border:3px solid #0b57d0;background:#fff"></div>
<svg class="abs" style="left:58.500px;top:645.500px" width="53.500" height="53"><use href="#ushi" x="0" y="0" width="53.500" height="53"/></svg>
<div class="abs" style="left:123px;top:644px;width:60px;height:59px;background:#f3d8f8"></div>
<div class="abs" style="left:125px;top:645px;width:40px;height:1.700px;background:#2a2030"></div>
<div class="abs" style="left:125px;top:648.500px;width:22px;height:1.700px;background:#2a2030"></div>
<div class="abs" style="left:125.0px;top:654.0px;width:52.0px;height:25.0px;background:repeating-linear-gradient(180deg,#3a3040 0,#3a3040 1.15px,transparent 1.15px,transparent 2.5px)"></div><div class="abs" style="left:129.0px;top:680.0px;width:51.0px;height:22.0px;background:repeating-linear-gradient(180deg,#3a3040 0,#3a3040 1.15px,transparent 1.15px,transparent 2.5px)"></div>
<div class="abs" style="left:65px;top:700px;width:23px;height:1.600px;background:#222"></div>
<div class="abs" style="left:65.0px;top:704.0px;width:41.0px;height:22.0px;background:repeating-linear-gradient(180deg,#b0b0b0 0,#b0b0b0 1.0px,transparent 1.0px,transparent 3.7px)"></div>
<div class="abs" style="left:137px;top:706px;width:30px;height:1.600px;background:#333"></div>
<div class="abs" style="left:132.0px;top:710.0px;width:51.0px;height:17.0px;background:repeating-linear-gradient(180deg,#b0b0b0 0,#b0b0b0 1.0px,transparent 1.0px,transparent 3.4px)"></div>
<!-- thumb 6 -->
<div class="abs fn" style="top:748px">6</div>
<div class="abs th" style="top:746px"></div>
<div class="abs" style="left:55px;top:754px;width:60px;height:30px;background:#f3d8f8"></div>
<div class="abs" style="left:56.0px;top:755.0px;width:50.0px;height:5.0px;background:repeating-linear-gradient(180deg,#3a3040 0,#3a3040 1.5px,transparent 1.5px,transparent 3.2px)"></div><div class="abs" style="left:56.0px;top:766.0px;width:50.0px;height:9.0px;background:repeating-linear-gradient(180deg,#3a3040 0,#3a3040 1.5px,transparent 1.5px,transparent 3.2px)"></div>
<div class="abs" style="left:135px;top:754.500px;width:42px;height:2px;background:#111"></div>
<div class="abs" style="left:135.0px;top:760.0px;width:45.0px;height:14.0px;background:repeating-linear-gradient(180deg,#a5a5a5 0,#a5a5a5 1.0px,transparent 1.0px,transparent 3.0px)"></div>
</div></div>
<!-- filmstrip scrollbar -->
<div class="abs" style="left:217px;top:316px;width:7px;height:57px;border-radius:3.500px;background:#d3d6da"></div>
<!-- bottom icons -->
<svg class="abs" style="left:30px;top:803px" width="16" height="16" viewBox="0 0 16 16"><g fill="none" stroke="#444746" stroke-width="1.600"><rect x="1" y="1" width="5.300" height="5.300"/><rect x="9.700" y="1" width="5.300" height="5.300"/><rect x="1" y="9.700" width="5.300" height="5.300"/><rect x="9.700" y="9.700" width="5.300" height="5.300"/></g></svg>
<svg class="abs" style="left:83px;top:805px" width="8" height="12" viewBox="0 0 8 12"><path d="M6.500 1L1.500 6l5 5" fill="none" stroke="#444746" stroke-width="1.700"/></svg>

<!-- canvas bg -->
<div class="abs" style="left:247px;top:318px;width:960px;height:488px;background:#fff"></div>
<div class="abs" style="left:225px;top:318px;width:22px;height:505px;background:#fff"></div>
<div class="abs" style="left:247px;top:297px;width:960px;height:21px;background:#f9fbfd"></div>
<div class="abs" style="left:246px;top:317px;width:960px;height:1px;background:#9aa0a6"></div>
<div class="abs" style="left:246px;top:317px;width:1px;height:506px;background:#9aa0a6"></div>
<div class="abs" style="left:331px;top:318px;width:1px;height:488px;background:#9aa0a6"></div>
<svg class="abs" style="left:0;top:0" width="1206" height="320" viewBox="0 0 1206 320"><path d="M339.7 317V313.5" stroke="#5f6368" stroke-width=".8"/><path d="M348.3 317V313.5" stroke="#5f6368" stroke-width=".8"/><path d="M356.9 317V313.5" stroke="#5f6368" stroke-width=".8"/><path d="M365.6 317V311.0" stroke="#5f6368" stroke-width=".8"/><path d="M374.2 317V313.5" stroke="#5f6368" stroke-width=".8"/><path d="M382.8 317V313.5" stroke="#5f6368" stroke-width=".8"/><path d="M391.4 317V313.5" stroke="#5f6368" stroke-width=".8"/><path d="M408.6 317V313.5" stroke="#5f6368" stroke-width=".8"/><path d="M417.2 317V313.5" stroke="#5f6368" stroke-width=".8"/><path d="M425.8 317V313.5" stroke="#5f6368" stroke-width=".8"/><path d="M434.5 317V311.0" stroke="#5f6368" stroke-width=".8"/><path d="M443.1 317V313.5" stroke="#5f6368" stroke-width=".8"/><path d="M451.7 317V313.5" stroke="#5f6368" stroke-width=".8"/><path d="M460.3 317V313.5" stroke="#5f6368" stroke-width=".8"/><path d="M477.5 317V313.5" stroke="#5f6368" stroke-width=".8"/><path d="M486.1 317V313.5" stroke="#5f6368" stroke-width=".8"/><path d="M494.7 317V313.5" stroke="#5f6368" stroke-width=".8"/><path d="M503.4 317V311.0" stroke="#5f6368" stroke-width=".8"/><path d="M512.0 317V313.5" stroke="#5f6368" stroke-width=".8"/><path d="M520.6 317V313.5" stroke="#5f6368" stroke-width=".8"/><path d="M529.2 317V313.5" stroke="#5f6368" stroke-width=".8"/><path d="M546.4 317V313.5" stroke="#5f6368" stroke-width=".8"/><path d="M555.0 317V313.5" stroke="#5f6368" stroke-width=".8"/><path d="M563.6 317V313.5" stroke="#5f6368" stroke-width=".8"/><path d="M572.2 317V311.0" stroke="#5f6368" stroke-width=".8"/><path d="M580.9 317V313.5" stroke="#5f6368" stroke-width=".8"/><path d="M589.5 317V313.5" stroke="#5f6368" stroke-width=".8"/><path d="M598.1 317V313.5" stroke="#5f6368" stroke-width=".8"/><path d="M615.3 317V313.5" stroke="#5f6368" stroke-width=".8"/><path d="M623.9 317V313.5" stroke="#5f6368" stroke-width=".8"/><path d="M632.5 317V313.5" stroke="#5f6368" stroke-width=".8"/><path d="M641.2 317V311.0" stroke="#5f6368" stroke-width=".8"/><path d="M649.8 317V313.5" stroke="#5f6368" stroke-width=".8"/><path d="M658.4 317V313.5" stroke="#5f6368" stroke-width=".8"/><path d="M667.0 317V313.5" stroke="#5f6368" stroke-width=".8"/><path d="M684.2 317V313.5" stroke="#5f6368" stroke-width=".8"/><path d="M692.8 317V313.5" stroke="#5f6368" stroke-width=".8"/><path d="M701.4 317V313.5" stroke="#5f6368" stroke-width=".8"/><path d="M710.1 317V311.0" stroke="#5f6368" stroke-width=".8"/><path d="M718.7 317V313.5" stroke="#5f6368" stroke-width=".8"/><path d="M727.3 317V313.5" stroke="#5f6368" stroke-width=".8"/><path d="M735.9 317V313.5" stroke="#5f6368" stroke-width=".8"/><path d="M753.1 317V313.5" stroke="#5f6368" stroke-width=".8"/><path d="M761.7 317V313.5" stroke="#5f6368" stroke-width=".8"/><path d="M770.3 317V313.5" stroke="#5f6368" stroke-width=".8"/><path d="M779.0 317V311.0" stroke="#5f6368" stroke-width=".8"/><path d="M787.6 317V313.5" stroke="#5f6368" stroke-width=".8"/><path d="M796.2 317V313.5" stroke="#5f6368" stroke-width=".8"/><path d="M804.8 317V313.5" stroke="#5f6368" stroke-width=".8"/><path d="M822.0 317V313.5" stroke="#5f6368" stroke-width=".8"/><path d="M830.6 317V313.5" stroke="#5f6368" stroke-width=".8"/><path d="M839.2 317V313.5" stroke="#5f6368" stroke-width=".8"/><path d="M847.9 317V311.0" stroke="#5f6368" stroke-width=".8"/><path d="M856.5 317V313.5" stroke="#5f6368" stroke-width=".8"/><path d="M865.1 317V313.5" stroke="#5f6368" stroke-width=".8"/><path d="M873.7 317V313.5" stroke="#5f6368" stroke-width=".8"/><path d="M890.9 317V313.5" stroke="#5f6368" stroke-width=".8"/><path d="M899.5 317V313.5" stroke="#5f6368" stroke-width=".8"/><path d="M908.1 317V313.5" stroke="#5f6368" stroke-width=".8"/><path d="M916.8 317V311.0" stroke="#5f6368" stroke-width=".8"/><path d="M925.4 317V313.5" stroke="#5f6368" stroke-width=".8"/><path d="M934.0 317V313.5" stroke="#5f6368" stroke-width=".8"/><path d="M942.6 317V313.5" stroke="#5f6368" stroke-width=".8"/><path d="M959.8 317V313.5" stroke="#5f6368" stroke-width=".8"/><path d="M968.4 317V313.5" stroke="#5f6368" stroke-width=".8"/><path d="M977.0 317V313.5" stroke="#5f6368" stroke-width=".8"/><path d="M985.7 317V311.0" stroke="#5f6368" stroke-width=".8"/><path d="M994.3 317V313.5" stroke="#5f6368" stroke-width=".8"/><path d="M1002.9 317V313.5" stroke="#5f6368" stroke-width=".8"/><path d="M1011.5 317V313.5" stroke="#5f6368" stroke-width=".8"/><path d="M1028.7 317V313.5" stroke="#5f6368" stroke-width=".8"/><path d="M1037.3 317V313.5" stroke="#5f6368" stroke-width=".8"/><path d="M1045.9 317V313.5" stroke="#5f6368" stroke-width=".8"/><path d="M1054.6 317V311.0" stroke="#5f6368" stroke-width=".8"/><path d="M1063.2 317V313.5" stroke="#5f6368" stroke-width=".8"/><path d="M1071.8 317V313.5" stroke="#5f6368" stroke-width=".8"/><path d="M1080.4 317V313.5" stroke="#5f6368" stroke-width=".8"/><path d="M1097.6 317V313.5" stroke="#5f6368" stroke-width=".8"/><path d="M1106.2 317V313.5" stroke="#5f6368" stroke-width=".8"/><path d="M1114.8 317V313.5" stroke="#5f6368" stroke-width=".8"/><path d="M1123.5 317V311.0" stroke="#5f6368" stroke-width=".8"/><path d="M1132.1 317V313.5" stroke="#5f6368" stroke-width=".8"/><path d="M1140.7 317V313.5" stroke="#5f6368" stroke-width=".8"/><path d="M1149.3 317V313.5" stroke="#5f6368" stroke-width=".8"/><path d="M1166.5 317V313.5" stroke="#5f6368" stroke-width=".8"/><path d="M1175.1 317V313.5" stroke="#5f6368" stroke-width=".8"/><path d="M1183.7 317V313.5" stroke="#5f6368" stroke-width=".8"/><path d="M1192.4 317V311.0" stroke="#5f6368" stroke-width=".8"/><path d="M1201.0 317V313.5" stroke="#5f6368" stroke-width=".8"/></svg><div class="abs rn" style="left:390.0px;top:300px">1</div><div class="abs rn" style="left:458.9px;top:300px">2</div><div class="abs rn" style="left:527.8px;top:300px">3</div><div class="abs rn" style="left:596.7px;top:300px">4</div><div class="abs rn" style="left:665.6px;top:300px">5</div><div class="abs rn" style="left:734.5px;top:300px">6</div><div class="abs rn" style="left:803.4px;top:300px">7</div><div class="abs rn" style="left:872.3px;top:300px">8</div><div class="abs rn" style="left:941.2px;top:300px">9</div><div class="abs rn" style="left:1010.1px;top:300px">10</div><div class="abs rn" style="left:1079.0px;top:300px">11</div><div class="abs rn" style="left:1147.9px;top:300px">12</div><svg class="abs" style="left:0;top:0" width="250" height="830" viewBox="0 0 250 830"><path d="M246 322.9H242.5" stroke="#5f6368" stroke-width=".8"/><path d="M246 331.6H240.0" stroke="#5f6368" stroke-width=".8"/><path d="M246 340.2H242.5" stroke="#5f6368" stroke-width=".8"/><path d="M246 348.8H242.5" stroke="#5f6368" stroke-width=".8"/><path d="M246 357.4H242.5" stroke="#5f6368" stroke-width=".8"/><path d="M246 374.6H242.5" stroke="#5f6368" stroke-width=".8"/><path d="M246 383.2H242.5" stroke="#5f6368" stroke-width=".8"/><path d="M246 391.8H242.5" stroke="#5f6368" stroke-width=".8"/><path d="M246 400.5H240.0" stroke="#5f6368" stroke-width=".8"/><path d="M246 409.1H242.5" stroke="#5f6368" stroke-width=".8"/><path d="M246 417.7H242.5" stroke="#5f6368" stroke-width=".8"/><path d="M246 426.3H242.5" stroke="#5f6368" stroke-width=".8"/><path d="M246 443.5H242.5" stroke="#5f6368" stroke-width=".8"/><path d="M246 452.1H242.5" stroke="#5f6368" stroke-width=".8"/><path d="M246 460.7H242.5" stroke="#5f6368" stroke-width=".8"/><path d="M246 469.4H240.0" stroke="#5f6368" stroke-width=".8"/><path d="M246 478.0H242.5" stroke="#5f6368" stroke-width=".8"/><path d="M246 486.6H242.5" stroke="#5f6368" stroke-width=".8"/><path d="M246 495.2H242.5" stroke="#5f6368" stroke-width=".8"/><path d="M246 512.4H242.5" stroke="#5f6368" stroke-width=".8"/><path d="M246 521.0H242.5" stroke="#5f6368" stroke-width=".8"/><path d="M246 529.6H242.5" stroke="#5f6368" stroke-width=".8"/><path d="M246 538.2H240.0" stroke="#5f6368" stroke-width=".8"/><path d="M246 546.9H242.5" stroke="#5f6368" stroke-width=".8"/><path d="M246 555.5H242.5" stroke="#5f6368" stroke-width=".8"/><path d="M246 564.1H242.5" stroke="#5f6368" stroke-width=".8"/><path d="M246 581.3H242.5" stroke="#5f6368" stroke-width=".8"/><path d="M246 589.9H242.5" stroke="#5f6368" stroke-width=".8"/><path d="M246 598.5H242.5" stroke="#5f6368" stroke-width=".8"/><path d="M246 607.2H240.0" stroke="#5f6368" stroke-width=".8"/><path d="M246 615.8H242.5" stroke="#5f6368" stroke-width=".8"/><path d="M246 624.4H242.5" stroke="#5f6368" stroke-width=".8"/><path d="M246 633.0H242.5" stroke="#5f6368" stroke-width=".8"/><path d="M246 650.2H242.5" stroke="#5f6368" stroke-width=".8"/><path d="M246 658.8H242.5" stroke="#5f6368" stroke-width=".8"/><path d="M246 667.4H242.5" stroke="#5f6368" stroke-width=".8"/><path d="M246 676.1H240.0" stroke="#5f6368" stroke-width=".8"/><path d="M246 684.7H242.5" stroke="#5f6368" stroke-width=".8"/><path d="M246 693.3H242.5" stroke="#5f6368" stroke-width=".8"/><path d="M246 701.9H242.5" stroke="#5f6368" stroke-width=".8"/><path d="M246 719.1H242.5" stroke="#5f6368" stroke-width=".8"/><path d="M246 727.7H242.5" stroke="#5f6368" stroke-width=".8"/><path d="M246 736.3H242.5" stroke="#5f6368" stroke-width=".8"/><path d="M246 745.0H240.0" stroke="#5f6368" stroke-width=".8"/><path d="M246 753.6H242.5" stroke="#5f6368" stroke-width=".8"/><path d="M246 762.2H242.5" stroke="#5f6368" stroke-width=".8"/><path d="M246 770.8H242.5" stroke="#5f6368" stroke-width=".8"/><path d="M246 788.0H242.5" stroke="#5f6368" stroke-width=".8"/><path d="M246 796.6H242.5" stroke="#5f6368" stroke-width=".8"/><path d="M246 805.2H242.5" stroke="#5f6368" stroke-width=".8"/><path d="M246 813.9H240.0" stroke="#5f6368" stroke-width=".8"/></svg><div class="abs rn" style="left:226px;top:359.0px;transform:rotate(-90deg)">1</div><div class="abs rn" style="left:226px;top:427.9px;transform:rotate(-90deg)">2</div><div class="abs rn" style="left:226px;top:496.8px;transform:rotate(-90deg)">3</div><div class="abs rn" style="left:226px;top:565.7px;transform:rotate(-90deg)">4</div><div class="abs rn" style="left:226px;top:634.6px;transform:rotate(-90deg)">5</div><div class="abs rn" style="left:226px;top:703.5px;transform:rotate(-90deg)">6</div><div class="abs rn" style="left:226px;top:772.4px;transform:rotate(-90deg)">7</div>
<!-- slide image -->
<div class="abs" style="left:414px;top:318px;width:380px;height:376px;overflow:hidden;border-radius:7px 7px 9px 9px"><svg class="abs" style="left:0;top:-1px" width="380" height="377"><use href="#ushi" x="0" y="0" width="380" height="377"/></svg></div>
<!-- pink text box -->
<div class="abs" style="left:874px;top:318px;width:333px;height:418px;background:#f3d8f8;overflow:hidden">
<div class="abs pk" style="left:18px;top:-11.5px">«ГОНКИ ИЛЛЮСТРАТОРОВ» – (БИТВА</div>
<div class="abs pk" style="left:18px;top:8px">ИЛЛЮСТРАТОРОВ)</div>
<div class="abs pk" style="left:18px;top:49px">ЭТО ЗРЕЛИЩНО. НУЖНА ИНТЕРАКТИВНАЯ</div>
<div class="abs pk" style="left:18px;top:69px">ПАНЕЛЬ ИЛИ ЭКРАН.</div>
<div class="abs pk" style="left:18px;top:89px">ЗАДАЧА: МЫ ДАЕМ УЧЕНИКАМ ПОСЛОВИЦУ</div>
<div class="abs pk" style="left:18px;top:109px">ИЛИ НАЗВАНИЕ ПРОИЗВЕДЕНИЯ. ОНИ</div>
<div class="abs pk" style="left:18px;top:130px">ДОЛЖНЫ ПРИДУМАТЬ ТЕКСТОВОЕ</div>
<div class="abs pk" style="left:18px;top:150px">ОПИСАНИЕ (ПРОМТ) ДЛЯ НЕЙРОСЕТИ</div>
<div class="abs pk" style="left:18px;top:170px">(МОЖНО ИСПОЛЬЗОВАТЬ БЕСПЛАТНЫЕ</div>
<div class="abs pk" style="left:18px;top:191px">ТИПА KANDINSKY, ШЕДЕВРУМ ИЛИ BING),</div>
<div class="abs pk" style="left:18px;top:211px">ЧТОБЫ КАРТИНКА ПОЛУЧИЛАСЬ</div>
<div class="abs pk" style="left:18px;top:231px">УЗНАВАЕМОЙ.</div>
<div class="abs pk" style="left:40px;top:251px">•</div>
<div class="abs pk" style="left:49px;top:251px">ЗАДАНИЕ: НАРИСУЙ ФРАЗЕОЛОГИЗМ "КОТ</div>
<div class="abs pk" style="left:49px;top:271px">НАПЛАКАЛ" (ЛЮБЫЕ ДРУГИЕ)</div>
<div class="abs pk" style="left:40px;top:292px">•</div>
<div class="abs pk" style="left:49px;top:292px">СЛОЖНОСТЬ: ЕСЛИ НАПИСАТЬ ПРОСТО</div>
<div class="abs pk" style="left:49px;top:312px">"КОТ ПЛАЧЕТ", ИИ НАРИСУЕТ ГРУСТНОГО</div>
<div class="abs pk" style="left:49px;top:333px">КОТИКА. А НУЖНО, ЧТОБЫ БЫЛО ТАК.</div>
<div class="abs pk" style="left:49px;top:353px">УЧЕНИКИ ДОЛЖНЫ ПРОЯВИТЬ</div>
<div class="abs pk" style="left:49px;top:373px">СМЕКАЛКУ: "МИКРОСКОПИЧЕСКИЙ КОТ</div>
<div class="abs pk" style="left:49px;top:393px">СО СЛЕЗОЙ В ПУСТОЙ КОМНАТЕ"</div>
</div>
<!-- body text left -->
<div class="abs" id="gen" style="left:457px;top:698px;height:24px;line-height:24px;font-family:'Liberation Serif',serif;font-weight:bold;font-size:18.7px;color:#222;white-space:nowrap">Генерация контента</div>
<div class="abs sj" style="left:457px;top:729px">ИИ может помочь учителям быстро</div>
<div class="abs sj" style="left:457px;top:758px">создавать разнообразные учебные</div>
<div class="abs sj" style="left:457px;top:786px;height:20px;overflow:hidden">материалы, от текстов до</div>
<!-- body text right -->
<div class="abs" id="oc" style="left:978px;top:743px;height:24px;line-height:24px;font-family:'Liberation Serif',serif;font-weight:bold;font-size:18.8px;color:#222;white-space:nowrap">Оценка и обратная связь</div>
<div class="abs" style="left:945px;top:772px;width:262px;height:24px;overflow:hidden"><div class="sj" style="width:600px;text-align:left;text-align-last:left;white-space:nowrap;word-spacing:20px">Инструменты ИИ могут автоматизировать</div></div>
<!-- h scrollbar -->
<div class="abs" style="left:247px;top:806px;width:960px;height:17px;background:#f9fbfd"></div>
<div class="abs" style="left:255px;top:808px;width:952px;height:10px;border-radius:5px;background:#dadce0"></div>
<div class="abs" style="left:247px;top:822px;width:960px;height:1px;background:#e3e6ea"></div>
<div class="abs" style="left:848px;top:826px;width:50px;height:2px;background:#5f6368"></div>

<!-- ======= MEET PIP ======= -->

<div id="meet" class="abs"></div>
<div class="abs" style="left:1205px;top:243px;width:379px;height:35px;background:#1f2022;border-radius:10px 10px 0 0"></div>
<svg class="abs" style="left:1217px;top:254px" width="14" height="13" viewBox="0 0 14 13"><circle cx="2.800" cy="3" r="1.900" fill="none" stroke="#9aa0a6" stroke-width="1.400"/><path d="M6.800 3H13.500" stroke="#9aa0a6" stroke-width="1.500" stroke-linecap="round"/><circle cx="11" cy="10" r="1.900" fill="none" stroke="#9aa0a6" stroke-width="1.400"/><path d="M.8 10h6.500" stroke="#9aa0a6" stroke-width="1.500" stroke-linecap="round"/></svg>
<div class="abs" id="meeturl" style="left:1241px;top:250px;height:20px;line-height:20px;font-size:12.500px;color:#9aa0a6;white-space:nowrap">meet.google.com</div>
<svg class="abs" style="left:1560px;top:254px" width="15" height="12" viewBox="0 0 15 12"><rect x=".8" y=".8" width="9.500" height="10.400" rx="1.200" fill="none" stroke="#9aa0a6" stroke-width="1.400"/><path d="M10.300 4.800L14.200 2v8l-3.900-2.800z" fill="#9aa0a6"/></svg>
<!-- name chip -->
<div class="abs" style="left:1219px;top:279px;width:268px;height:33px;border-radius:6px;background:#3c4043"></div>
<div class="abs" style="left:1231.500px;top:283px;width:25px;height:25px;border-radius:13px;background:#e6e3df;overflow:hidden">
  <div class="abs" style="left:13px;top:0;width:12px;height:18px;background:#e9e2c4"></div>
  <div class="abs" style="left:5px;top:3px;width:12px;height:10px;border-radius:6px 6px 3px 3px;background:#2f2622"></div>
  <div class="abs" style="left:7px;top:8px;width:9px;height:11px;border-radius:4px;background:#d9a58e"></div>
  <div class="abs" style="left:4px;top:19px;width:16px;height:8px;border-radius:6px 6px 0 0;background:#474c50"></div>
</div>
<div class="abs" id="mname" style="left:1264px;top:285px;height:20px;line-height:20px;font-size:11.75px;font-weight:bold;color:#e8eaed;white-space:nowrap">Светлана Филатова ШЛ им. Б...</div>
<div class="abs" style="left:1458.500px;top:281px;width:28px;height:28px;border-radius:14px;background:#2f3134"></div>
<svg class="abs" style="left:1470px;top:286px" width="5" height="18" viewBox="0 0 5 18"><circle cx="2.500" cy="2.500" r="1.900" fill="#e8eaed"/><circle cx="2.500" cy="9" r="1.900" fill="#e8eaed"/><circle cx="2.500" cy="15.500" r="1.900" fill="#e8eaed"/></svg>
<div class="abs" style="left:1507px;top:282px;width:30px;height:30px;border-radius:15px;background:#28292b"></div>
<svg class="abs" style="left:1514px;top:290px" width="16" height="14" viewBox="0 0 16 14"><path d="M3 2h3.500l1.500 1.800H15V13H1V4z" fill="#f6d0c0"/><path d="M4 5v7M6.800 5v7M9.600 5v7M12.400 5v7M2 7h12M2 9.800h12" stroke="#28292b" stroke-width=".8"/><path d="M1 .8L14.500 13.500" stroke="#28292b" stroke-width="2.600"/><path d="M1.500 .5L15 13" stroke="#f6d0c0" stroke-width="1.200"/></svg>
<div class="abs" style="left:1542.500px;top:282px;width:30px;height:30px;border-radius:15px;background:#28292b"></div>
<svg class="abs" style="left:1549px;top:290px" width="18" height="14" viewBox="0 0 18 14"><circle cx="6.500" cy="3.800" r="2.600" fill="none" stroke="#81c995" stroke-width="1.500"/><path d="M1 13v-1.200C1 9.800 4 8.800 6.500 8.800s5.500 1 5.500 3V13z" fill="none" stroke="#81c995" stroke-width="1.500" stroke-linejoin="round"/><path d="M14.500 2.500v5M12 5h5" stroke="#81c995" stroke-width="1.500"/></svg>

<!-- shared screen thumbnail -->
<div class="abs" style="left:1213px;top:327px;width:364.500px;height:151px;border-radius:8px;background:#fff;overflow:hidden;box-shadow:0 0 0 1px #a9c4ee inset">
  <div class="abs" style="left:1px;top:1px;width:362px;height:26px;background:#f7f9fc"></div>
  <div class="abs" style="left:6px;top:5px;width:5px;height:8px;border-radius:1px;background:#fbbc04"></div>
  <div class="abs" style="left:15px;top:4.500px;width:93px;height:2.500px;background:#777"></div>
  <div class="abs" style="left:113px;top:4px;width:10px;height:4px;border-radius:1px;background:#fbbc04"></div>
  <div class="abs" style="left:127px;top:5px;width:20px;height:2px;background:#999"></div>
  <div class="abs" style="left:15px;top:10px;width:150px;height:2px;background:#8a8a8a;opacity:.8"></div>
  <div class="abs" style="left:218px;top:3px;width:32px;height:8px;background:repeating-linear-gradient(90deg,#777 0,#777 5px,transparent 5px,transparent 12px);opacity:.7"></div>
  <div class="abs" style="left:262px;top:2px;width:33px;height:9px;border-radius:5px;border:1px solid #888;background:#fff"></div>
  <div class="abs" style="left:299px;top:2px;width:50px;height:9px;border-radius:5px;background:#c2e7ff"></div>
  <div class="abs" style="left:306px;top:5.500px;width:30px;height:2px;background:#2a5a80"></div>
  <div class="abs" style="left:355px;top:4px;width:4px;height:4px;background:#444;transform:rotate(45deg)"></div>
  <div class="abs" style="left:362px;top:1px;width:9px;height:9px;border-radius:5px;background:#a08a7a"></div>
  <div class="abs" style="left:5px;top:16px;width:330px;height:9px;border-radius:5px;background:#edf2fa"></div>
  <div class="abs" style="left:9px;top:19.500px;width:110px;height:2px;background:repeating-linear-gradient(90deg,#666 0,#666 3px,transparent 3px,transparent 7.500px)"></div>
  <div class="abs" style="left:86px;top:17px;width:7px;height:7px;background:#d3e3fd"></div>
  <div class="abs" style="left:126px;top:19.500px;width:95px;height:2px;background:repeating-linear-gradient(90deg,#777 0,#777 11px,transparent 11px,transparent 17px)"></div>
  <!-- mini filmstrip -->
  <div class="abs" style="left:12px;top:30px;width:34px;height:118px;overflow:hidden">
    <div class="abs" style="left:0;top:8px;width:34px;height:20px;border-radius:3px;border:.5px solid #ccc;background:#fff"></div><div class="abs" style="left:3px;top:11px;width:9px;height:12px;background:#f3d8f8"></div><div class="abs" style="left:5px;top:13px;width:5px;height:5px;background:#6aa7e8"></div><div class="abs" style="left:14px;top:12px;width:17px;height:12px;background:repeating-linear-gradient(180deg,#aaa 0,#aaa 1px,transparent 1px,transparent 2px)"></div>
    <div class="abs" style="left:0;top:32px;width:34px;height:20px;border-radius:3px;border:.5px solid #ccc;background:#fff"></div><div class="abs" style="left:6px;top:34px;width:6px;height:8px;background:#5a5c9a"></div><div class="abs" style="left:18px;top:34px;width:14px;height:16px;background:#f3d8f8"></div><div class="abs" style="left:19px;top:36px;width:12px;height:13px;background:repeating-linear-gradient(180deg,#4a3a52 0,#4a3a52 1px,transparent 1px,transparent 2px)"></div>
    <div class="abs" style="left:0;top:56px;width:34px;height:20px;border-radius:3px;border:.5px solid #ccc;background:#fff"></div><div class="abs" style="left:3px;top:58px;width:13px;height:16px;background:#f3d8f8"></div><div class="abs" style="left:4px;top:59px;width:11px;height:12px;background:repeating-linear-gradient(180deg,#4a3a52 0,#4a3a52 1px,transparent 1px,transparent 2px)"></div><div class="abs" style="left:20px;top:61px;width:11px;height:10px;background:repeating-linear-gradient(180deg,#999 0,#999 1px,transparent 1px,transparent 2px)"></div>
    <div class="abs" style="left:0;top:80px;width:34px;height:21px;border-radius:3px;border:1px solid #0b57d0;background:#fff"></div><div class="abs" style="left:4px;top:82px;width:11px;height:11px;background:#4a7a8c"></div><div class="abs" style="left:4px;top:90px;width:11px;height:3px;background:#4a9a40"></div><div class="abs" style="left:18px;top:82px;width:13px;height:13px;background:#f3d8f8"></div><div class="abs" style="left:19px;top:83px;width:11px;height:11px;background:repeating-linear-gradient(180deg,#4a3a52 0,#4a3a52 1px,transparent 1px,transparent 2px)"></div>
    <div class="abs" style="left:0;top:105px;width:34px;height:20px;border-radius:3px;border:.5px solid #ccc;background:#fff"></div><div class="abs" style="left:3px;top:107px;width:13px;height:8px;background:#f3d8f8"></div>
  </div>
  <div class="abs" style="left:5px;top:30px;width:3px;height:100px;background:repeating-linear-gradient(180deg,#555 0,#555 3px,transparent 3px,transparent 24px);opacity:.6"></div>
  <div class="abs" style="left:50px;top:32px;width:1.500px;height:14px;border-radius:1px;background:#ccc"></div>
  <div class="abs" style="left:55px;top:26px;width:295px;height:1px;background:#c9c9c9"></div>
  <div class="abs" style="left:55px;top:27px;width:1px;height:120px;background:#c9c9c9"></div>
  <div class="abs" style="left:75px;top:27px;width:1px;height:118px;background:#d5d5d5"></div>
  <!-- mini slide -->
  <svg class="abs" style="left:94px;top:30px;border-radius:2px" width="87" height="86"><use href="#ushi" x="0" y="0" width="87" height="86"/></svg>
  <div class="abs" style="left:200px;top:29px;width:100px;height:98px;background:#f3d8f8"></div>
  <div class="abs" style="left:204px;top:30px;width:38px;height:2px;background:#2a2030"></div>
  <div class="abs" style="left:204px;top:38px;width:84px;height:51px;background:repeating-linear-gradient(180deg,#3a3040 0,#3a3040 1.900px,transparent 1.900px,transparent 4.700px)"></div>
  <div class="abs" style="left:211px;top:89.700px;width:82px;height:36px;background:repeating-linear-gradient(180deg,#3a3040 0,#3a3040 1.900px,transparent 1.900px,transparent 4.700px)"></div>
  <div class="abs" style="left:305px;top:28px;width:28px;height:110px;background:#fff"></div>
  <div class="abs" style="left:333px;top:28px;width:26px;height:118px;background:#fbfcfe"></div>
  <div class="abs" style="left:102px;top:119px;width:32px;height:1.800px;background:#555"></div>
  <div class="abs" style="left:103px;top:124px;width:66px;height:21px;background:repeating-linear-gradient(180deg,transparent 0,transparent 1.500px,#555 1.500px,#555 4px,transparent 4px,transparent 7px)"></div>
  <div class="abs" style="left:222px;top:130px;width:50px;height:2px;background:#555"></div>
  <div class="abs" style="left:214px;top:136.500px;width:40px;height:2.500px;background:#777"></div>
  <div class="abs" style="left:66px;top:145px;width:280px;height:2.500px;border-radius:1px;background:#dadce0"></div>
  <div class="abs" style="left:352px;top:44px;width:4px;height:62px;background:repeating-linear-gradient(180deg,#777 0,#777 3.500px,transparent 3.500px,transparent 12.500px)"></div>
  <div class="abs" style="left:358px;top:136px;width:4px;height:4px;border-radius:2px;background:#7a6cf0"></div>
</div>
<!-- floating pill -->
<div class="abs" style="left:1449px;top:420px;width:120px;height:50px;border-radius:25px;background:#2a2b2e;box-shadow:0 1px 4px rgba(0,0,0,.4)"></div>
<div class="abs" style="left:1453px;top:424px;width:62px;height:42px;border-radius:21px;background:#37383b"></div>
<div class="abs" style="left:1522px;top:424px;width:42px;height:42px;border-radius:21px;background:#37383b"></div>
<svg class="abs" style="left:1462px;top:434px" width="23" height="22" viewBox="0 0 23 22"><path d="M2 8c2-3 5-4 6-2.500s-2 3.500-4 5.500-2 4 0 4.500 4-1.500 6-2" fill="none" stroke="#e8eaed" stroke-width="2" stroke-linecap="round"/><path d="M8 19.500l1-4.500L18.500 3l3.500 3-9.500 12z" fill="none" stroke="#e8eaed" stroke-width="1.900" stroke-linejoin="round"/></svg>
<svg class="abs" style="left:1497px;top:441px" width="11" height="7" viewBox="0 0 11 7"><path d="M0 7h11L5.500 0z" fill="#e8eaed"/></svg>
<svg class="abs" style="left:1534px;top:435px" width="18" height="20" viewBox="0 0 18 20"><circle cx="14.500" cy="3.500" r="2.500" fill="none" stroke="#e8eaed" stroke-width="1.700"/><circle cx="3.500" cy="10" r="2.500" fill="none" stroke="#e8eaed" stroke-width="1.700"/><circle cx="14.500" cy="16.500" r="2.500" fill="none" stroke="#e8eaed" stroke-width="1.700"/><path d="M5.700 8.700l6.600-3.900M5.700 11.300l6.600 3.900" stroke="#e8eaed" stroke-width="1.700"/></svg>



<!-- ===== participant tiles ===== -->
<svg width="0" height="0" style="position:absolute"><defs><filter id="bl1" x="-10%" y="-10%" width="120%" height="120%"><feGaussianBlur stdDeviation="1.100"/></filter><filter id="bl2" x="-10%" y="-10%" width="120%" height="120%"><feGaussianBlur stdDeviation=".7"/></filter></defs></svg>
<!-- tile 1 -->
<div class="abs" style="left:1211px;top:484px;width:90px;height:117px;border-radius:13px;background:#a9c2f0"></div>
<div class="abs" style="left:1213.500px;top:486.500px;width:85px;height:112px;border-radius:11px;overflow:hidden;background:#d9d7d3">
<svg class="abs" style="left:0;top:0" width="85" height="112" viewBox="0 0 85 112"><g filter="url(#bl1)">
<rect width="85" height="112" fill="#dad8d5"/>
<path d="M0 0H85V40L40 0z" fill="#ecebe9"/><path d="M20 0L85 55V70L0 0z" fill="#c9c6c2" opacity=".6"/><path d="M50 0L85 28V40L38 0z" fill="#f7f7f6"/>
<rect x="60" y="30" width="25" height="82" fill="#f1f0ee"/>
<rect x="0" y="44" width="7" height="40" fill="#c66a45"/>
<rect x="0" y="84" width="10" height="28" fill="#b9b1a5"/>
<path d="M12 70C8 40 22 22 42 23S74 42 72 72C72 86 66 92 60 94L18 92C14 86 12 80 12 70z" fill="#7b6254"/>
<ellipse cx="40" cy="57" rx="21" ry="28" fill="#c9a592"/>
<path d="M19 45C24 30 52 26 62 44C52 36 30 38 19 45z" fill="#85695a"/>
<path d="M0 112V96C8 84 22 82 30 84L52 86C66 84 80 92 85 104V112z" fill="#d6c9b4"/>
<path d="M30 84C34 92 48 92 52 86L50 80H32z" fill="#c09c8a"/>
</g>
<g fill="none" stroke="#5a2f3a" stroke-width="1.600"><rect x="19" y="47" width="18" height="13" rx="5"/><rect x="42" y="47" width="18" height="13" rx="5"/><path d="M37 52h5"/></g>
<ellipse cx="28" cy="54" rx="3" ry="1.300" fill="#4a3530"/><ellipse cx="51" cy="54" rx="3" ry="1.300" fill="#4a3530"/>
<path d="M35 76q5 2 10 0" stroke="#9a5a55" stroke-width="1.600" fill="none"/>
</svg></div>
<div class="abs" style="left:1265.500px;top:496px;width:23px;height:23px;border-radius:12px;background:#a8c7fa"></div>
<svg class="abs" style="left:1269px;top:505px" width="16" height="5" viewBox="0 0 16 5"><circle cx="2.500" cy="2.500" r="1.900" fill="#0b2f6b"/><circle cx="8" cy="2.500" r="1.900" fill="#0b2f6b"/><circle cx="13.500" cy="2.500" r="1.900" fill="#0b2f6b"/></svg>
<div class="abs tn" style="left:1224px;top:573px">Алмаг...</div>
<!-- tile 2 -->
<div class="abs" style="left:1307px;top:486.500px;width:84.500px;height:113px;border-radius:11px;overflow:hidden;background:#9a9a9a">
<svg class="abs" style="left:0;top:0" width="85" height="113" viewBox="0 0 85 113"><g filter="url(#bl2)">
<rect width="85" height="113" fill="#a9a9a9"/>
<rect x="0" y="0" width="85" height="8" fill="#d9d9d9"/>
<g fill="#e3e3e3"><rect x="0" y="8" width="9" height="105"/><rect x="9" y="20" width="76" height="2.500"/><rect x="9" y="36" width="76" height="2.500"/><rect x="9" y="52" width="76" height="2.500"/><rect x="9" y="68" width="76" height="2.500"/><rect x="9" y="84" width="76" height="2.500"/><rect x="24" y="0" width="3" height="113"/></g>
<g fill="#5a5a5a"><rect x="10" y="9" width="14" height="11"/><rect x="28" y="9" width="57" height="11" /><rect x="10" y="24" width="14" height="12"/><rect x="10" y="40" width="14" height="12"/><rect x="10" y="56" width="14" height="12"/><rect x="10" y="72" width="14" height="12"/><rect x="68" y="24" width="17" height="12"/><rect x="70" y="40" width="15" height="12"/><rect x="70" y="56" width="15" height="12"/><rect x="70" y="72" width="15" height="12"/></g>
<g fill="#cfcfcf"><rect x="13" y="9" width="2" height="11"/><rect x="18" y="24" width="2" height="12"/><rect x="32" y="9" width="2" height="11"/><rect x="40" y="9" width="3" height="11"/><rect x="50" y="9" width="2" height="11"/><rect x="60" y="9" width="3" height="11"/><rect x="72" y="9" width="2" height="11"/><rect x="74" y="24" width="2" height="12"/><rect x="78" y="40" width="2" height="12"/><rect x="14" y="56" width="2" height="12"/><rect x="76" y="72" width="2" height="12"/></g>
<path d="M12 60C8 26 22 6 43 6S76 24 74 58C76 80 80 96 85 102V113H4C10 96 14 80 12 60z" fill="#33262a"/>
<ellipse cx="43" cy="52" rx="28" ry="43" fill="#dcb9a8"/>
<path d="M15 40C18 16 34 8 43 8S68 16 71 40C64 24 54 15 43 14C32 15 22 24 15 40z" fill="#3a2a2c"/>
<path d="M58 62C66 60 74 64 72 78C70 90 62 100 54 106L46 100C56 94 60 80 58 62z" fill="#d6ae9d"/>
<path d="M0 113V106C8 98 18 96 26 96L34 104L54 106L62 98C72 100 80 102 85 108V113z" fill="#a6959c"/>
</g>
<g fill="none" stroke="#1d1418" stroke-width="2.300"><path d="M10 50C10 45 15 44 23 44S38 45 38 52 33 63 24 63 10 58 10 50z"/><path d="M46 52C46 45 52 44 61 44S74 45 74 50 68 63 59 63 46 58 46 52z"/><path d="M38 51q4-2 8 0"/></g>
<ellipse cx="25" cy="53" rx="4" ry="1.700" fill="#3a2a4a"/><ellipse cx="59" cy="53" rx="4" ry="1.700" fill="#3a2a4a"/>
<path d="M34 82q7 2.500 14 0" stroke="#b06a6a" stroke-width="2.200" fill="none"/>
</svg></div>
<div class="abs tn" style="left:1318px;top:573px">Айтол...</div>
<!-- tile 3 -->
<div class="abs" style="left:1399.500px;top:486.500px;width:84px;height:113px;border-radius:11px;overflow:hidden;background:linear-gradient(#4c4624,#413b20)"></div>
<div class="abs" style="left:1415px;top:519px;width:49px;height:49px;border-radius:25px;overflow:hidden;background:#3a342c">
<svg class="abs" style="left:0;top:0" width="49" height="49" viewBox="0 0 49 49"><g filter="url(#bl2)"><rect width="49" height="49" fill="#4a4238"/><rect x="0" y="0" width="49" height="18" fill="#5a5248"/><path d="M6 20h10v12H6z" fill="#2a2622"/><path d="M8 49V32C10 22 18 20 22 20S34 22 36 32V49z" fill="#2b4470"/><ellipse cx="22" cy="13" rx="6.500" ry="8" fill="#d9b59a"/><path d="M14 14C13 4 19 2 23 2S31 5 30 14C28 8 26 6 22 6S16 9 14 14z" fill="#7a5a3a"/><rect x="41" y="12" width="3.500" height="18" rx="1.500" fill="#f3ebe0"/><path d="M10 46C18 42 34 42 42 46V49H10z" fill="#e6d9d0"/></g></svg></div>
<div class="abs" style="left:1452px;top:496px;width:23px;height:23px;border-radius:12px;background:#5f5213"></div>
<svg class="abs" style="left:1456.500px;top:500px" width="14" height="15" viewBox="0 0 14 15"><rect x="5" y="1" width="4" height="7.500" rx="2" fill="#ead880"/><path d="M2.500 7a4.500 4.500 0 0 0 9 0M7 11.500V14" fill="none" stroke="#ead880" stroke-width="1.300"/><path d="M1.500 1L13 13.500" stroke="#5f5213" stroke-width="2.600"/><path d="M1.500 1.500L12.500 13.500" stroke="#ead880" stroke-width="1.300"/></svg>
<div class="abs tn" style="left:1409.500px;top:573px">Динар...</div>
<!-- tile 4 -->
<div class="abs" style="left:1491.500px;top:486.500px;width:85px;height:113px;border-radius:11px;overflow:hidden;background:radial-gradient(ellipse at 50% 25%,#44688a 0,#375673 55%,#2d465e 100%)"></div>
<div class="abs" style="left:1509px;top:518.500px;width:50px;height:50px;border-radius:25px;overflow:hidden;background:#a8d6fb">
<svg class="abs" style="left:0;top:0" width="50" height="50" viewBox="0 0 50 50"><rect width="50" height="50" fill="#a8d6fb"/><path d="M13 50C11 34 14 20 25 19S39 34 37 50z" fill="#8c4a1c"/><path d="M20 50C19 36 22 26 25 22C27 30 28 40 27 50z" fill="#6f3612"/><path d="M10 50l3-6 6 6zM40 50l-3-6-6 6z" fill="#f0c9a8"/><rect x="17" y="42" width="6" height="8" fill="#3f63c9"/><g filter="url(#bl2)"><circle cx="13" cy="15" r="7" fill="#b455c8"/><circle cx="13" cy="15" r="3.500" fill="#e26aa8"/><circle cx="37" cy="15" r="7" fill="#a654c8"/><circle cx="37" cy="15" r="3.500" fill="#e060a8"/><circle cx="25" cy="11" r="5.500" fill="#7a5ad0"/><circle cx="27" cy="14" r="2.600" fill="#f4cf3a"/><circle cx="20" cy="19" r="3" fill="#5a70d8"/><circle cx="31" cy="19" r="3" fill="#d85a9a"/></g></svg></div>
<div class="abs" style="left:1544px;top:496px;width:23px;height:23px;border-radius:12px;background:#123f63"></div>
<svg class="abs" style="left:1548.500px;top:500px" width="14" height="15" viewBox="0 0 14 15"><rect x="5" y="1" width="4" height="7.500" rx="2" fill="#a6d4f7"/><path d="M2.500 7a4.500 4.500 0 0 0 9 0M7 11.500V14" fill="none" stroke="#a6d4f7" stroke-width="1.300"/><path d="M1.500 1L13 13.500" stroke="#123f63" stroke-width="2.600"/><path d="M1.500 1.500L12.500 13.500" stroke="#a6d4f7" stroke-width="1.300"/></svg>
<div class="abs tn" style="left:1502.500px;top:573px">Анар ...</div>


<!-- more tile -->
<div class="abs" style="left:1212.500px;top:607px;width:156.500px;height:113px;border-radius:11px;background:#2f3033"></div>
<div class="abs" style="left:1252.500px;top:633.500px;width:40px;height:40px;border-radius:20px;background:#e8710a"></div>
<div class="abs" style="left:1291.500px;top:633.500px;width:40px;height:40px;border-radius:20px;background:#1a8fe3;box-shadow:0 0 0 1px #2f3033"></div>
<div class="abs" style="left:1252.500px;top:633.500px;width:40px;height:40px;line-height:40px;text-align:center;font-size:21px;color:#fff">S</div>
<div class="abs" style="left:1291.500px;top:633.500px;width:40px;height:40px;line-height:40px;text-align:center;font-size:21px;color:#fff">M</div>
<div class="abs" id="more27" style="left:1212.500px;top:679px;width:156.500px;height:20px;line-height:20px;text-align:center;font-size:11.9px;font-weight:bold;color:#e8eaed">Ещё 27 чел.</div>
<!-- self tile -->
<div class="abs" style="left:1377px;top:607px;width:200.500px;height:113px;border-radius:11px;overflow:hidden;background:#dad8d4">
<svg class="abs" style="left:0;top:0" width="201" height="113" viewBox="0 0 201 113"><defs><linearGradient id="wall" x1="0" y1="0" x2="1" y2="0"><stop offset="0" stop-color="#cfcdc9"/><stop offset=".5" stop-color="#dddbd7"/><stop offset="1" stop-color="#e3e1dd"/></linearGradient></defs>
<rect width="201" height="113" fill="url(#wall)"/>
<g filter="url(#bl1)">
<rect x="0" y="92" width="60" height="21" fill="#efeeec"/><rect x="150" y="96" width="51" height="17" fill="#e9e8e4"/>
<!-- plants -->
<g fill="#5f8a50"><ellipse cx="10" cy="74" rx="5" ry="4"/><ellipse cx="17" cy="78" rx="5" ry="3.500"/><ellipse cx="6" cy="82" rx="4" ry="3.500"/><ellipse cx="14" cy="86" rx="6" ry="4"/><ellipse cx="22" cy="83" rx="4" ry="3"/><ellipse cx="31" cy="70" rx="4" ry="3"/><ellipse cx="38" cy="76" rx="5" ry="2.500"/><ellipse cx="34" cy="65" rx="2.500" ry="2.500"/><ellipse cx="44" cy="72" rx="3" ry="2"/><ellipse cx="28" cy="78" rx="3" ry="2.500"/></g><path d="M34 68V88M12 76V92" stroke="#4a6a3c" stroke-width="1"/>
<ellipse cx="35" cy="90" rx="6" ry="7" fill="#8e8a88"/><rect x="8" y="90" width="10" height="7" fill="#e6e4e0"/>
<g fill="#6a9a50"><ellipse cx="158" cy="82" rx="5" ry="3.500"/><ellipse cx="167" cy="76" rx="5" ry="4"/><ellipse cx="151" cy="87" rx="5" ry="3"/><ellipse cx="175" cy="82" rx="4" ry="3"/><ellipse cx="163" cy="86" rx="4" ry="2.500"/></g>
<rect x="160" y="86" width="12" height="12" rx="3" fill="#dcdad4"/>
<!-- jacket -->
<path d="M30 113C36 96 52 88 72 82L84 70H120L132 84C150 88 166 96 176 113z" fill="#e4e2dc"/>
<path d="M120 74L132 84C150 88 166 96 176 113H128C140 100 132 84 118 78z" fill="#b9c0b8"/>
<path d="M84 84L98 113H106L112 90z" fill="#2a2a2e"/>
<path d="M76 84C80 78 86 74 90 72L100 113H88z" fill="#efeeea"/>
<!-- neck/face -->
<path d="M86 70H118L114 92C108 98 98 98 92 92z" fill="#c39f8d"/>
<ellipse cx="103" cy="34" rx="33" ry="33" fill="#948469"/>
<ellipse cx="103" cy="57" rx="27" ry="33" fill="#c6a18e"/><ellipse cx="103" cy="53" rx="22" ry="8" fill="#b08a78" opacity=".55"/>
<path d="M72 48C74 22 92 12 110 14C124 16 132 28 133 46C126 32 116 26 104 27C90 28 80 36 72 48z" fill="#a89880"/>
<path d="M76 36C82 18 98 10 112 12C98 16 88 22 80 40z" fill="#b9a98e"/>
</g>
<g fill="none" stroke="#b9a9a2" stroke-width="1.500"><rect x="77" y="44" width="23" height="17" rx="6"/><rect x="106" y="44" width="23" height="17" rx="6"/><path d="M100 50h6"/></g>
<path d="M82 52q6 2 12 0M111 52q6 2 12 0" stroke="#4a3630" stroke-width="1.800" fill="none"/>
<path d="M97 78q6 2 12 0" stroke="#a8605a" stroke-width="1.800" fill="none"/>
</svg></div>
<div class="abs" id="selfname" style="left:1387px;top:694px;height:20px;line-height:20px;font-size:12.1px;font-weight:bold;color:#fff;white-space:nowrap;text-shadow:0 0 3px rgba(0,0,0,.55)">Светлана Филатова ...</div>
<div class="abs" style="left:1548.500px;top:692px;width:25px;height:25px;border-radius:13px;background:#2c2c2d"></div>
<svg class="abs" style="left:1554px;top:697px" width="15" height="15" viewBox="0 0 15 15"><path d="M3.500 0V11.500H15M0 3.500H11.500V15" fill="none" stroke="#fff" stroke-width="1.700"/></svg>

<!-- reactions bar -->
<div class="abs" style="left:1229.500px;top:735px;width:275.500px;height:41px;border-radius:21px;background:#2a2b2e"></div>
<svg class="abs" style="left:1246px;top:750px" width="8" height="12" viewBox="0 0 8 12"><path d="M6.500 1L1.500 6l5 5" fill="none" stroke="#6f7378" stroke-width="1.700"/></svg>
<svg class="abs" style="left:1480px;top:750px" width="8" height="12" viewBox="0 0 8 12"><path d="M1.500 1L6.500 6l-5 5" fill="none" stroke="#e8eaed" stroke-width="1.800"/></svg>
<!-- heart -->
<svg class="abs" style="left:1279px;top:744px" width="26" height="24" viewBox="0 0 26 24"><path d="M13 22C4 15 1 11 1 7A6 6 0 0 1 13 5 6 6 0 0 1 25 7c0 4-3 8-12 15z" fill="#f04e98"/><path d="M13 20C6 14.500 3.500 11 3.500 7.500A4 4 0 0 1 8 4" fill="none" stroke="#ff86bd" stroke-width="2"/><path d="M18 5l.9 2.300 2.300.9-2.300.9L18 11.400l-.9-2.300-2.300-.9 2.300-.9zM8 11l.7 1.700 1.700.7-1.700.7L8 15.800l-.7-1.700-1.700-.7 1.700-.7zM21 .5l.6 1.500 1.500.6-1.500.6L21 4.700l-.6-1.500-1.500-.6 1.500-.6z" fill="#ffe082"/></svg>
<!-- thumbs up -->
<svg class="abs" style="left:1321px;top:744px" width="24" height="24" viewBox="0 0 24 24"><rect x="1" y="11" width="5.500" height="11" rx="1.500" fill="#f2a600"/><path d="M7.500 11.500C10 9 11 6 11 3a2.200 2.200 0 0 1 4.300.5c.2 2-.3 4-1 5.500H20.500a2 2 0 0 1 1.800 2.800l-2.600 8A2.500 2.500 0 0 1 17.300 22H7.500z" fill="#fcc934"/></svg>
<!-- party popper -->
<svg class="abs" style="left:1362px;top:743px" width="26" height="26" viewBox="0 0 26 26"><path d="M2 24L8.500 8 18 17.500z" fill="#f2a600"/><path d="M2 24L5 16.500 9.500 21z" fill="#e37400"/><path d="M8.500 8c2 .5 4 2 6 4s3 3.800 3.500 5.500" stroke="#c26401" stroke-width="1.300" fill="none"/><circle cx="20" cy="4" r="1.800" fill="#ee675c"/><circle cx="12" cy="3" r="1.500" fill="#4285f4"/><circle cx="23" cy="13" r="1.500" fill="#34a853"/><path d="M14 9c1-3 3-4 5-3M17 13c3-1 5 0 6 2M11 6l-1-4" stroke="#e94fa0" stroke-width="1.700" fill="none"/><path d="M20 9l3-1M21 19l2 2" stroke="#4285f4" stroke-width="1.700"/></svg>
<!-- clap -->
<svg class="abs" style="left:1404px;top:743px" width="25" height="26" viewBox="0 0 25 26"><path d="M4 13l7-8a1.800 1.800 0 0 1 2.800 2.300L11 11l6-6.500a1.800 1.800 0 0 1 2.700 2.400L15 12.500l5-5a1.800 1.800 0 0 1 2.600 2.500l-7.600 10A8 8 0 0 1 4.500 22C1.500 19.500 2 15.500 4 13z" fill="#fcc934"/><path d="M2.500 15l5.500-7a1.700 1.700 0 0 1 2.700 2" fill="none" stroke="#f2a600" stroke-width="2.200" stroke-linecap="round"/><path d="M17 1v3M21 2l-1.500 2.500M13 1.500l1 2.500" stroke="#f2a600" stroke-width="1.500" stroke-linecap="round"/></svg>
<!-- joy -->
<svg class="abs" style="left:1443px;top:743px" width="26" height="26" viewBox="0 0 26 26"><circle cx="13" cy="12.500" r="11" fill="#fcc934"/><path d="M6 14.500h14c0 4-3 7-7 7s-7-3-7-7z" fill="#7a4a12"/><path d="M8.500 18.500c2.500-1.500 6.500-1.500 9 0-1 2-2.700 3-4.500 3s-3.500-1-4.500-3z" fill="#ee675c"/><path d="M5.500 9.500q2.500-3 5 0M15.500 9.500q2.500-3 5 0" fill="none" stroke="#7a4a12" stroke-width="1.700" stroke-linecap="round"/><path d="M1 13c1-2 3-3 5-2-1 3-2 5-4 5.500-1.500-.5-1.800-2-1-3.500zM25 13c-1-2-3-3-5-2 1 3 2 5 4 5.500 1.500-.5 1.800-2 1-3.500z" fill="#4fa4f5"/></svg>
<!-- yellow status -->
<div class="abs" style="left:1527px;top:744px;width:24px;height:24px;border-radius:12px;background:#3a3320"></div>
<div class="abs" style="left:1529px;top:746px;width:20px;height:20px;border-radius:10px;background:#fbc02d"></div>

<!-- controls -->
<div class="abs" style="left:1251.500px;top:786px;width:57px;height:45px;border-radius:23px;background:#333537"></div>
<svg class="abs" style="left:1272px;top:796px" width="16" height="24" viewBox="0 0 16 24"><rect x="4.800" y="1" width="6.400" height="13" rx="3.200" fill="#e8eaed"/><path d="M1.200 11a6.800 6.800 0 0 0 13.600 0M8 18v4.500" fill="none" stroke="#e8eaed" stroke-width="2"/></svg>
<div class="abs" style="left:1316.500px;top:786px;width:57px;height:45px;border-radius:23px;background:#333537"></div>
<svg class="abs" style="left:1333px;top:799px" width="24" height="18" viewBox="0 0 24 18"><rect x="1.200" y="1.200" width="15.600" height="15.600" rx="2" fill="none" stroke="#e8eaed" stroke-width="2.400"/><path d="M17 7l6-4.500v13L17 11z" fill="#e8eaed"/></svg>
<div class="abs" style="left:1380.500px;top:784.500px;width:57px;height:46.500px;border-radius:13px;background:#a8c7fa"></div>
<svg class="abs" style="left:1397px;top:797px" width="24" height="21" viewBox="0 0 24 21"><rect x="2.500" y="1" width="19" height="14" rx="1.500" fill="none" stroke="#0b2f6b" stroke-width="2"/><path d="M0 19.500h24" stroke="#0b2f6b" stroke-width="2.200"/><path d="M12 12V5.500M8.800 8.300L12 5l3.200 3.300" fill="none" stroke="#0b2f6b" stroke-width="2"/></svg>
<div class="abs" style="left:1445.500px;top:786px;width:27.500px;height:45px;border-radius:14px;background:#333537"></div>
<svg class="abs" style="left:1457px;top:799px" width="5" height="19" viewBox="0 0 5 19"><circle cx="2.500" cy="2.500" r="2" fill="#e8eaed"/><circle cx="2.500" cy="9.500" r="2" fill="#e8eaed"/><circle cx="2.500" cy="16.500" r="2" fill="#e8eaed"/></svg>
<div class="abs" style="left:1480.500px;top:786px;width:57px;height:45px;border-radius:23px;background:#dc362e"></div>
<svg class="abs" style="left:1497px;top:802px" width="24" height="11" viewBox="0 0 24 11"><path d="M12 1C7.500 1 3.500 2.500 1 5.200c-.5.600-.5 1.300 0 1.800l2 2.200c.5.500 1.200.5 1.700.1L7.500 7.500c.4-.3.600-.8.600-1.300V4.500c2.500-.8 5.300-.8 7.800 0v1.700c0 .5.200 1 .6 1.300l2.800 1.800c.5.400 1.200.4 1.700-.1l2-2.200c.5-.5.500-1.200 0-1.800C20.500 2.500 16.500 1 12 1z" fill="#fff"/></svg>
<!-- resize grip -->
<svg class="abs" style="left:1208px;top:822px" width="12" height="12" viewBox="0 0 12 12"><path d="M1 3l8 8M1 7.500l3.500 3.500" stroke="#5f6368" stroke-width="1.600" stroke-linecap="round"/></svg>
<!-- extension badge -->
<div class="abs" style="left:1543px;top:771px;width:41px;height:38px;border-radius:19px 0 0 19px;background:#fff;box-shadow:0 1px 4px rgba(0,0,0,.35)"></div>
<svg class="abs" style="left:1553px;top:779px" width="22" height="22" viewBox="0 0 20 20"><path d="M9.400 2.200C7.500 1 5 2 4.600 4.100 2.600 4.700 1.700 7 2.800 8.700 1.500 10.300 2 12.800 3.900 13.600c.1 2.300 2.500 3.800 4.600 2.900.4-.2.700-.4.900-.700zM10.600 2.200c1.900-1.200 4.400-.2 4.800 1.900 2 .6 2.900 2.900 1.800 4.600 1.300 1.600.8 4.100-1.100 4.900-.1 2.300-2.500 3.800-4.600 2.900-.4-.2-.7-.4-.9-.700z" fill="url(#br1)"/></svg>
<!-- strip right of meet window -->
<div class="abs" style="left:1584px;top:800px;width:10px;height:43px;background:#f3f5f9"></div>

<svg class="abs" style="left:1587px;top:828px" width="6" height="9" viewBox="0 0 6 9"><path d="M5 1L1.500 4.500 5 8" fill="none" stroke="#444746" stroke-width="1.400"/></svg>
<!-- ======= TASKBAR ======= -->

<div id="taskbar" class="abs"></div>
<!-- start -->
<svg class="abs" style="left:441px;top:862px" width="26" height="26" viewBox="0 0 26 26"><defs><linearGradient id="wg" x1="0" y1="0" x2="1" y2="1"><stop offset="0" stop-color="#6fd3ff"/><stop offset="1" stop-color="#1a8fe8"/></linearGradient></defs><g fill="url(#wg)"><rect x="0" y="0" width="12.200" height="12.200" rx="1"/><rect x="13.800" y="0" width="12.200" height="12.200" rx="1"/><rect x="0" y="13.800" width="12.200" height="12.200" rx="1"/><rect x="13.800" y="13.800" width="12.200" height="12.200" rx="1"/></g></svg>
<!-- search -->
<div class="abs" style="left:481px;top:858px;width:227px;height:33px;border-radius:17px;background:#2f3338;border:1px solid #3c4046"></div>
<svg class="abs" style="left:490px;top:866px" width="18" height="18" viewBox="0 0 18 18"><circle cx="7.500" cy="7.500" r="5.700" fill="none" stroke="#e6e6e6" stroke-width="1.700"/><path d="M11.800 11.800l4.700 4.700" stroke="#e6e6e6" stroke-width="1.900" stroke-linecap="round"/></svg>
<div class="abs" id="poisk" style="left:519px;top:865px;height:20px;line-height:20px;font-size:14.500px;color:#d6d6d6">Поиск</div>
<svg class="abs" style="left:655px;top:860px" width="48" height="29" viewBox="0 0 48 29"><ellipse cx="24" cy="16" rx="23" ry="12" fill="#6b5a4a"/><ellipse cx="14" cy="14" rx="10" ry="8" fill="#c9a56a"/><ellipse cx="30" cy="17" rx="12" ry="8" fill="#8a4a2a"/><path d="M8 18c6-8 14-8 18-2s10 4 14-2" fill="none" stroke="#e9d6a8" stroke-width="2.500"/><ellipse cx="38" cy="12" rx="6" ry="5" fill="#b8864a"/><circle cx="22" cy="9" r="3.500" fill="#d9c08a"/><path d="M10 22c8 3 20 3 30-1" stroke="#3a2a20" stroke-width="2" fill="none"/></svg>
<!-- task view -->
<svg class="abs" style="left:722px;top:863px" width="26" height="23" viewBox="0 0 26 23"><rect x="7" y="0" width="19" height="16" rx="1.500" fill="#6f7378"/><rect x="0" y="6" width="19" height="17" rx="1.500" fill="#e8e8e8"/></svg>
<!-- edge -->
<svg class="abs" style="left:767px;top:862px" width="26" height="26" viewBox="0 0 26 26"><defs><linearGradient id="eg" x1="0" y1="0" x2="1" y2="1"><stop offset="0" stop-color="#35c1f1"/><stop offset=".6" stop-color="#1b82d6"/><stop offset="1" stop-color="#0c59a4"/></linearGradient></defs><circle cx="13" cy="13" r="12.500" fill="url(#eg)"/><path d="M1 14C1 6 8 1.500 14 2.500 20 3.500 24.500 8 24.500 12.500c0 3-2.500 5-5.500 5-2.500 0-4-1.200-4-3 0-1.500 1-2 1-3.500 0-2-2-3.500-4.500-3.500C7 7.500 3 10.500 1 14z" fill="#5fe0a0" opacity=".85"/><path d="M9.500 13c-1.500 4 1 9.500 7 10.500-6 2-13-1.500-14.500-8C3 11 7 8.500 10.500 9c-1 1-1 2.500-1 4z" fill="#0d4f9e"/></svg>
<!-- explorer -->
<svg class="abs" style="left:812px;top:863px" width="27" height="23" viewBox="0 0 27 23"><path d="M1 3a2 2 0 0 1 2-2h7l3 3h11a2 2 0 0 1 2 2v3H1z" fill="#e8a712"/><rect x="1" y="6" width="25" height="16" rx="1.800" fill="#ffd350"/><rect x="1" y="16" width="25" height="6" rx="1.500" fill="#f4b92a"/><rect x="8" y="17.500" width="11" height="4.500" fill="#2d8ce8"/></svg>
<div class="abs" style="left:822px;top:892px;width:7px;height:3px;border-radius:2px;background:#8a8d91"></div>
<!-- word -->
<svg class="abs" style="left:858px;top:862px" width="26" height="26" viewBox="0 0 26 26"><rect x="7" y="2" width="18" height="22" rx="1.500" fill="#fff"/><rect x="7" y="2" width="18" height="5.500" fill="#41a5ee"/><rect x="7" y="7.500" width="18" height="5.500" fill="#2b7cd3"/><rect x="7" y="13" width="18" height="5.500" fill="#185abd"/><rect x="7" y="18.500" width="18" height="5.500" fill="#103f91"/><rect x="15" y="5" width="8" height="1.500" fill="#fff" opacity=".8"/><rect x="15" y="9.500" width="8" height="1.500" fill="#fff" opacity=".8"/><rect x="15" y="14" width="8" height="1.500" fill="#fff" opacity=".8"/><rect x="1" y="6" width="14" height="14" rx="1.500" fill="#185abd"/><path d="M3.500 9.500l1.800 7 2.200-6 2.200 6 1.800-7" fill="none" stroke="#fff" stroke-width="1.500" stroke-linejoin="round"/></svg>
<div class="abs" style="left:867px;top:892px;width:7px;height:3px;border-radius:2px;background:#8a8d91"></div>
<!-- player -->
<svg class="abs" style="left:905px;top:862px" width="26" height="26" viewBox="0 0 26 26"><rect x="1" y="1" width="24" height="24" rx="3" fill="#f7d217"/><circle cx="13" cy="10" r="5" fill="#fff7c0"/><path d="M11.500 7.500l4 2.500-4 2.500z" fill="#e8a800"/><rect x="6" y="18" width="14" height="3" fill="#5a4a00" opacity=".8"/></svg>
<!-- yandex -->
<svg class="abs" style="left:950px;top:862px" width="26" height="26" viewBox="0 0 26 26"><circle cx="13" cy="13" r="12.500" fill="#f13a1c"/><path d="M15 21V5.500h-2.300c-2.600 0-4.300 1.600-4.300 4 0 2 1 3.300 2.900 4.300L8 21M12.700 14h2.200" fill="none" stroke="#fff" stroke-width="2.300"/></svg>
<!-- whatsapp -->
<svg class="abs" style="left:995px;top:861px" width="27" height="27" viewBox="0 0 27 27"><path d="M13.500 1.500a12 12 0 0 0-10.300 18.200L1.500 25.500l6-1.600A12 12 0 1 0 13.500 1.500z" fill="#25d366"/><path d="M13.500 3.500a10 10 0 0 0-8.500 15.300l-.9 3.500 3.600-.9A10 10 0 1 0 13.500 3.500z" fill="#25d366" stroke="#fff" stroke-width="1.300"/><path d="M9.800 7.800c-.4 0-.9.100-1.300.6-.5.600-1.300 1.600-1 3.200.4 1.900 1.700 3.900 3.600 5.400 1.900 1.500 3.800 2.100 5 1.900 1.100-.2 2-1.100 2.200-1.900.1-.5.100-.9-.1-1l-2.300-1.100c-.3-.1-.6 0-.9.300l-.7 1c-.2.200-.5.300-.9.100-1.600-.8-2.900-1.900-3.700-3.400-.2-.3-.1-.6.100-.8l.6-.8c.2-.3.200-.5.100-.8l-1-2.200c-.1-.400-.4-.500-.700-.500z" fill="#fff"/></svg>
<!-- powerpoint -->
<svg class="abs" style="left:1042px;top:862px" width="26" height="26" viewBox="0 0 26 26"><rect x="7" y="2" width="18" height="22" rx="1.500" fill="#ed6c47"/><rect x="7" y="2" width="18" height="7" fill="#ff8f6b"/><rect x="7" y="17" width="18" height="7" fill="#c43e1c"/><rect x="15" y="6" width="8" height="1.600" fill="#fff"/><rect x="15" y="10" width="8" height="1.600" fill="#fff"/><rect x="15" y="14" width="8" height="1.600" fill="#fff"/><rect x="1" y="6" width="14" height="14" rx="1.500" fill="#c43e1c"/><path d="M5.500 17V9.500h3a2.300 2.300 0 0 1 0 4.600h-3" fill="none" stroke="#fff" stroke-width="1.700"/></svg>
<!-- excel -->
<svg class="abs" style="left:1088px;top:862px" width="26" height="26" viewBox="0 0 26 26"><rect x="7" y="2" width="18" height="22" rx="1.500" fill="#21a366"/><rect x="7" y="2" width="9" height="7.300" fill="#21a366"/><rect x="16" y="2" width="9" height="7.300" fill="#33c481"/><rect x="7" y="9.300" width="9" height="7.300" fill="#107c41"/><rect x="16" y="9.300" width="9" height="7.300" fill="#21a366"/><rect x="7" y="16.600" width="18" height="7.400" fill="#185c37"/><rect x="17.500" y="5" width="6" height="1.500" fill="#fff" opacity=".85"/><rect x="17.500" y="12" width="6" height="1.500" fill="#fff" opacity=".85"/><rect x="17.500" y="19" width="6" height="1.500" fill="#fff" opacity=".85"/><rect x="1" y="6" width="14" height="14" rx="1.500" fill="#107c41"/><path d="M4.500 9.500l7 7M11.500 9.500l-7 7" stroke="#fff" stroke-width="1.700"/></svg>
<!-- chrome (active) -->
<div class="abs" style="left:1127px;top:854px;width:39px;height:42px;border-radius:5px;background:#2c3036;border:1px solid #383c42"></div>
<svg class="abs" style="left:1133px;top:862px" width="26" height="26" viewBox="0 0 26 26"><circle cx="13" cy="13" r="12.500" fill="#fff"/><path d="M13 .5A12.500 12.500 0 0 1 23.800 6.700H13a6.300 6.300 0 0 0-5.500 3.200L2.800 3.800A12.500 12.500 0 0 1 13 .5z" fill="#ea4335"/><path d="M2.200 6.800l5.400 9.300A6.300 6.300 0 0 0 13 19.300l-3.800 6.600A12.500 12.500 0 0 1 2.200 6.800z" fill="#34a853" transform="translate(0,-.3)"/><path d="M23.800 6.700A12.500 12.500 0 0 1 10.500 25.300l5.400-9.300A6.300 6.300 0 0 0 18.500 9.800 6.300 6.300 0 0 0 16 6.700z" fill="#fbbc04"/><path d="M2.600 5.500A12.500 12.500 0 0 0 9.500 25l4-6.500c-3 0-5-1.500-6-3.300z" fill="#34a853"/><circle cx="13" cy="13" r="5.700" fill="#fff"/><circle cx="13" cy="13" r="4.600" fill="#4285f4"/></svg>
<div class="abs" style="left:1139px;top:892px;width:15px;height:3px;border-radius:2px;background:#4cc2ff"></div>
<!-- tray -->
<svg class="abs" style="left:1322px;top:871px" width="13" height="8" viewBox="0 0 13 8"><path d="M1.500 6.500l5-5 5 5" fill="none" stroke="#fff" stroke-width="1.500" stroke-linecap="round" stroke-linejoin="round"/></svg>
<svg class="abs" style="left:1355px;top:866px" width="12" height="17" viewBox="0 0 12 17"><rect x="3.500" y=".8" width="5" height="9" rx="2.500" fill="none" stroke="#62bcc4" stroke-width="1.300"/><path d="M1 8a5 5 0 0 0 10 0M6 13v3" fill="none" stroke="#62bcc4" stroke-width="1.300"/></svg>
<div class="abs" id="rus" style="left:1390px;top:866px;height:18px;line-height:18px;font-size:11.500px;color:#fff">РУС</div>
<svg class="abs" style="left:1432px;top:867px" width="18" height="14" viewBox="0 0 18 14"><path d="M1 5a11.500 11.500 0 0 1 16 0M3.600 7.800a7.700 7.700 0 0 1 10.800 0M6.200 10.400a4 4 0 0 1 5.600 0" fill="none" stroke="#fff" stroke-width="1.400" stroke-linecap="round"/><circle cx="9" cy="12.600" r="1.200" fill="#fff"/></svg>
<svg class="abs" style="left:1457px;top:868px" width="17" height="14" viewBox="0 0 17 14"><path d="M1 4.800h2.800L7.500 1.500v11L3.800 9.200H1z" fill="none" stroke="#fff" stroke-width="1.200" stroke-linejoin="round"/><path d="M10 4.500a3.500 3.500 0 0 1 0 5M12 2.500a6.300 6.300 0 0 1 0 9M14 .8a9 9 0 0 1 0 12.400" fill="none" stroke="#fff" stroke-width="1.200" stroke-linecap="round"/></svg>
<svg class="abs" style="left:1482px;top:870px" width="22" height="11" viewBox="0 0 22 11"><rect x=".7" y=".7" width="18.600" height="9.600" rx="2.800" fill="none" stroke="#fff" stroke-width="1.300"/><rect x="2.700" y="2.700" width="7" height="5.600" rx="1.200" fill="#fff"/><path d="M20.800 3.800v3.400" stroke="#fff" stroke-width="1.400" stroke-linecap="round"/></svg>
<div class="abs" id="clock" style="left:1500px;top:858px;width:80px;height:17px;line-height:17px;text-align:right;font-size:11.800px;color:#fff">15:41</div>
<div class="abs" id="date" style="left:1500px;top:874px;width:80px;height:17px;line-height:17px;text-align:right;font-size:11.800px;color:#fff">12.03.2026</div>


</div>
</body>
</html>
